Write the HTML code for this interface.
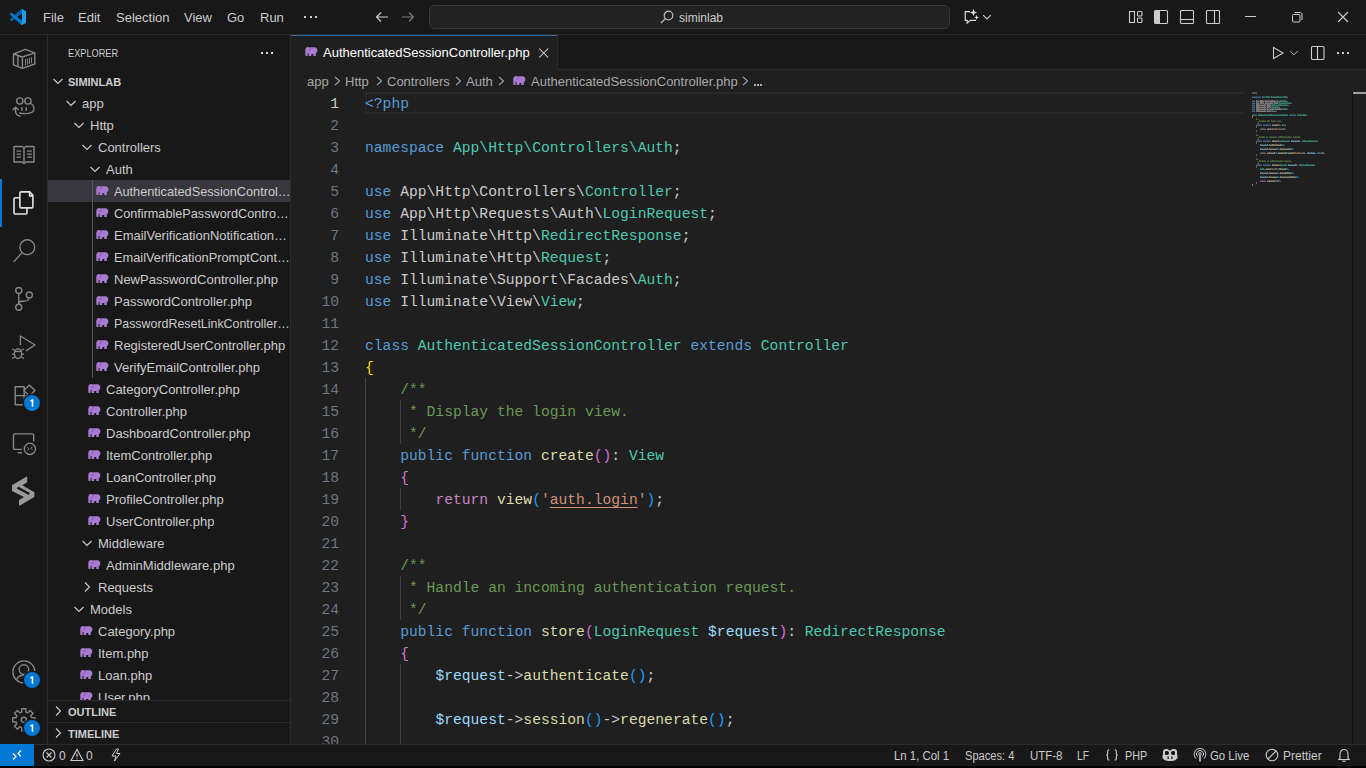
<!DOCTYPE html>
<html><head><meta charset="utf-8"><title>VS Code</title>
<style>
html,body{margin:0;padding:0;width:1366px;height:768px;overflow:hidden;background:#000;}
body{position:relative;font-family:"Liberation Sans",sans-serif;color:#cccccc;}
.a{position:absolute;display:block;}
.t{position:absolute;white-space:pre;line-height:1;}
.ui{font-size:13px;}
.code{position:absolute;left:0;top:0;font-family:"Liberation Mono",monospace;font-size:14.667px;white-space:pre;}
.ln{position:absolute;font-family:"Liberation Mono",monospace;font-size:14.667px;color:#6e7681;text-align:right;width:40px;}
.row{position:absolute;height:22px;line-height:22px;font-size:13px;white-space:nowrap;overflow:hidden;text-overflow:ellipsis;color:#cccccc;}
</style></head><body>

<div class="a" style="left:0;top:0;width:1366px;height:34px;background:#181818;border-bottom:1px solid #2b2b2b"></div>
<svg class="a" style="left:10px;top:9px" width="16" height="16" viewBox="0 0 100 100">
<path fill="#0065a9" d="M96.5 10.8L75.9 0.9C73.5-0.3 70.7 0.2 68.8 2.1L1.3 63.6C-0.5 65.3-0.5 68.1 1.3 69.8L6.8 74.8C8.3 76.2 10.5 76.3 12.1 75.1L93.3 13.5C96 11.5 99.9 13.4 99.9 16.8V16.6C99.9 14.2 98.6 11.9 96.5 10.8Z"/>
<path fill="#007acc" d="M96.5 89.2L75.9 99.1C73.5 100.3 70.7 99.8 68.8 97.9L1.3 36.4C-0.5 34.7-0.5 31.9 1.3 30.2L6.8 25.2C8.3 23.8 10.5 23.7 12.1 24.9L93.3 86.5C96 88.5 99.9 86.6 99.9 83.2V83.4C99.9 85.8 98.6 88.1 96.5 89.2Z"/>
<path fill="#1f9cf0" d="M75.9 99.1C73.5 100.3 70.7 99.8 68.8 97.9C71.1 100.2 75 98.6 75 95.3V4.7C75 1.4 71.1-0.2 68.8 2.1C70.7 0.2 73.5-0.3 75.9 0.9L96.5 10.8C98.6 11.9 100 14.1 100 16.5V83.5C100 85.9 98.6 88.1 96.5 89.2L75.9 99.1Z"/>
</svg>
<div class="t ui" style="left:43px;top:11px;color:#cccccc">File</div>
<div class="t ui" style="left:78px;top:11px;color:#cccccc">Edit</div>
<div class="t ui" style="left:116px;top:11px;color:#cccccc">Selection</div>
<div class="t ui" style="left:184px;top:11px;color:#cccccc">View</div>
<div class="t ui" style="left:227px;top:11px;color:#cccccc">Go</div>
<div class="t ui" style="left:260px;top:11px;color:#cccccc">Run</div>
<div class="a" style="left:304px;top:16px;width:2px;height:2px;background:#cccccc"></div>
<div class="a" style="left:309.5px;top:16px;width:2px;height:2px;background:#cccccc"></div>
<div class="a" style="left:315px;top:16px;width:2px;height:2px;background:#cccccc"></div>
<svg class="a" style="left:374px;top:9px" width="16" height="16" viewBox="0 0 16 16"><path d="M14 8H2.5M7 3.5L2.5 8L7 12.5" fill="none" stroke="#cccccc" stroke-width="1.2"/></svg>
<svg class="a" style="left:400px;top:9px" width="16" height="16" viewBox="0 0 16 16"><path d="M2 8H13.5M9 3.5L13.5 8L9 12.5" fill="none" stroke="#7a7a7a" stroke-width="1.2"/></svg>
<div class="a" style="left:429px;top:5px;width:519px;height:22px;background:#222222;border:1px solid #383838;border-radius:6px"></div>
<svg class="a" style="left:659px;top:9px" width="16" height="16" viewBox="0 0 16 16"><circle cx="9.5" cy="6.5" r="4.3" fill="none" stroke="#bbbbbb" stroke-width="1.2"/><path d="M6.5 9.5L2 14" stroke="#bbbbbb" stroke-width="1.3"/></svg>
<div class="t" style="left:679px;top:12px;font-size:12px;color:#cccccc">siminlab</div>
<svg class="a" style="left:955px;top:3px" width="45" height="27" viewBox="955 3 45 27"><path d="M970 11.6H965.2V20.3H967.2V23L970.5 20.3H976" fill="none" stroke="#dddddd" stroke-width="1.2"/><path d="M973.5 8.8L974.5 11.5L977.2 12.5L974.5 13.5L973.5 16.2L972.5 13.5L969.8 12.5L972.5 11.5Z" fill="#dddddd"/><path d="M976.6 14.8L977.3 16.7L979.2 17.4L977.3 18.1L976.6 20L975.9 18.1L974 17.4L975.9 16.7Z" fill="#dddddd"/><path d="M983.2 15.2L987 19L990.8 15.2" fill="none" stroke="#cccccc" stroke-width="1.1"/></svg>
<svg class="a" style="left:1128px;top:9px" width="16" height="16" viewBox="0 0 16 16"><rect x="1.5" y="2.5" width="5" height="11" fill="none" stroke="#cccccc" stroke-width="1.1"/><rect x="9.5" y="2.5" width="4.5" height="4.5" rx="1" fill="none" stroke="#cccccc" stroke-width="1.1"/><rect x="9.5" y="9" width="4.5" height="4.5" rx="1" fill="none" stroke="#cccccc" stroke-width="1.1"/></svg>
<svg class="a" style="left:1153px;top:9px" width="16" height="16" viewBox="0 0 16 16"><rect x="1.5" y="1.5" width="13" height="13" rx="1" fill="none" stroke="#cccccc" stroke-width="1.1"/><rect x="2" y="2" width="5" height="12" fill="#cccccc"/></svg>
<svg class="a" style="left:1179px;top:9px" width="16" height="16" viewBox="0 0 16 16"><rect x="1.5" y="1.5" width="13" height="13" rx="1" fill="none" stroke="#cccccc" stroke-width="1.1"/><path d="M2 10.5H14" stroke="#cccccc" stroke-width="1.1"/></svg>
<svg class="a" style="left:1205px;top:9px" width="16" height="16" viewBox="0 0 16 16"><rect x="1.5" y="1.5" width="13" height="13" rx="1" fill="none" stroke="#cccccc" stroke-width="1.1"/><path d="M9.5 2V14" stroke="#cccccc" stroke-width="1.1"/></svg>
<div class="a" style="left:1245px;top:16px;width:11px;height:1px;background:#cccccc"></div>
<svg class="a" style="left:1290px;top:10px" width="14" height="14" viewBox="0 0 14 14"><rect x="2.5" y="4.5" width="7.5" height="7.5" rx="1" fill="none" stroke="#cccccc" stroke-width="1"/><path d="M4.5 2.5H10.5C11 2.5 12 3.5 12 4V10" fill="none" stroke="#cccccc" stroke-width="1"/></svg>
<svg class="a" style="left:1337px;top:11px" width="12" height="12" viewBox="0 0 12 12"><path d="M1 1L11 11M11 1L1 11" stroke="#cccccc" stroke-width="1.1"/></svg>
<div class="a" style="left:0;top:35px;width:47px;height:709px;background:#181818;border-right:1px solid #2b2b2b"></div>
<div class="a" style="left:0;top:179px;width:2px;height:48px;background:#0078d4"></div>
<svg class="a" style="left:10px;top:45px" width="28" height="28" viewBox="0 0 28 28" fill="none" stroke="#868686" stroke-width="1.4" stroke-linejoin="round"><path d="M3.5 9L15.3 4.4L24.8 7.8V19L12.4 23.3L3.5 19.9Z"/><path d="M3.5 9L12.4 12L24.8 7.8M12.4 12V23.3M7.9 10.6V21.5"/><path d="M15.5 14.2V20.3M17.5 13.5V19.6M19.5 12.8V18.9M21.5 12.1V18.2" stroke-width="1"/></svg>
<svg class="a" style="left:10px;top:93px" width="28" height="28" viewBox="0 0 28 28" fill="none" stroke="#868686" stroke-width="1.4" stroke-linejoin="round"><circle cx="9.8" cy="8" r="3.1"/><circle cx="17.9" cy="8" r="3.1"/><path d="M20.3 10.3C22.6 11.1 24 13.1 24 15.6C24 18.9 21 20.6 16 20.6C12.8 20.6 10.4 20.3 9 19.8"/><path d="M11.9 14.3V17.8M16.2 14.3V17.8" stroke-width="1.5"/><path d="M5.5 14.2V18C5.5 20.6 7.6 22.8 10.6 23.2M2.6 17.1L5.5 14.2L8.6 17.1"/></svg>
<svg class="a" style="left:10px;top:141px" width="28" height="28" viewBox="0 0 28 28" fill="none" stroke="#868686" stroke-width="1.4" stroke-linejoin="round"><path d="M4 5.5H12.2L14 7L15.8 5.5H24V21H15.8L14 22.6L12.2 21H4Z"/><path d="M14 7V22.4"/><path d="M6.6 10.2H11M6.6 13.1H11M6.6 16.2H11M17.1 10.2H21.9M17.1 13.1H21.9M17.1 16.2H21.9" stroke-width="1.2"/></svg>
<svg class="a" style="left:10px;top:189px" width="28" height="28" viewBox="0 0 28 28" fill="none" stroke="#e2e2e2" stroke-width="1.6" stroke-linejoin="round"><path d="M9.9 8.8H5.2C4.5 8.8 4 9.3 4 10V23.8C4 24.5 4.5 25 5.2 25H15.8C16.5 25 17 24.5 17 23.8V18.9"/><path d="M11.1 2.9H19.7L22.9 6.2V17.7C22.9 18.4 22.4 18.9 21.7 18.9H11.1C10.4 18.9 9.9 18.4 9.9 17.7V4.1C9.9 3.4 10.4 2.9 11.1 2.9Z"/><path d="M19.6 3.2V6.9H22.7"/></svg>
<svg class="a" style="left:10px;top:237px" width="28" height="28" viewBox="0 0 28 28" fill="none" stroke="#868686" stroke-width="1.4" stroke-linejoin="round"><circle cx="17.3" cy="10.2" r="7.4"/><path d="M12 15.6L3.8 24.9"/></svg>
<svg class="a" style="left:10px;top:285px" width="28" height="28" viewBox="0 0 28 28" fill="none" stroke="#868686" stroke-width="1.4" stroke-linejoin="round"><circle cx="8.75" cy="5.5" r="3"/><circle cx="8.75" cy="22.2" r="3"/><circle cx="19.3" cy="10" r="3"/><path d="M8.75 8.5V19.2"/><path d="M19.1 13C18.8 15.3 16.8 16.2 13.5 16.2H11.5C9.8 16.2 8.75 17.3 8.75 18.8"/></svg>
<svg class="a" style="left:10px;top:333px" width="28" height="28" viewBox="0 0 28 28" fill="none" stroke="#868686" stroke-width="1.4" stroke-linejoin="round"><path d="M10.4 12.2V3L25 12L15.9 17.9"/><ellipse cx="8" cy="20.6" rx="3.6" ry="4.9"/><path d="M4.4 18.4H11.6"/><path d="M2.1 16L4.6 17.2M13.9 16L11.4 17.2M1.9 21.2H4.3M11.7 21.2H14.1M2.1 25.4L4.5 24.1M13.9 25.4L11.5 24.1" stroke-width="1.3"/></svg>
<svg class="a" style="left:10px;top:381px" width="28" height="28" viewBox="0 0 28 28" fill="none" stroke="#868686" stroke-width="1.4" stroke-linejoin="round"><path d="M5.2 5.8H14.2V23.8H5.2ZM5.2 14.6H14.2M14.2 23.8H23V14.6H14.2"/><path d="M19.4 3.9L24.9 9.4L19.4 14.9L13.9 9.4Z"/></svg>
<svg class="a" style="left:10px;top:429px" width="28" height="28" viewBox="0 0 28 28" fill="none" stroke="#868686" stroke-width="1.4" stroke-linejoin="round"><path d="M12 20.4H4.7C4 20.4 3.5 19.9 3.5 19.2V6.1C3.5 5.4 4 4.9 4.7 4.9H22.5C23.2 4.9 23.7 5.4 23.7 6.1V12.4"/><path d="M7.7 23.7H12"/><circle cx="19.9" cy="19.9" r="5.6"/><path d="M17.3 18.4L19 19.9L17.3 21.4M22.5 17.7L20.8 19.2L22.5 20.7" stroke-width="1"/></svg>
<svg class="a" style="left:0px;top:464px" width="48" height="48" viewBox="0 464 48 48"><path fill="#9a9a9a" d="M27.2 476.2V482.3L22.3 485.3L34.4 492.2V497L19 506V500L24 497L12 490.9V485.3Z"/><path d="M17.6 487.6L29.4 494" stroke="#181818" stroke-width="2.4"/></svg>
<svg class="a" style="left:10px;top:658px" width="28" height="28" viewBox="0 0 28 28" fill="none" stroke="#868686" stroke-width="1.4" stroke-linejoin="round"><circle cx="13.9" cy="13.9" r="11"/><circle cx="13.9" cy="11.6" r="4.8"/><path d="M6.6 21.6C8 18.6 10.7 17 13.9 17C17.1 17 19.8 18.6 21.2 21.6"/></svg>
<svg class="a" style="left:10px;top:706px" width="28" height="28" viewBox="0 0 28 28" fill="none" stroke="#868686" stroke-width="1.4" stroke-linejoin="round"><path d="M11.73 6.07L11.64 2.71L15.96 2.71L15.87 6.07L17.80 6.87L20.12 4.43L23.17 7.48L20.73 9.80L21.53 11.73L24.89 11.64L24.89 15.96L21.53 15.87L20.73 17.80L23.17 20.12L20.12 23.17L17.80 20.73L15.87 21.53L15.96 24.89L11.64 24.89L11.73 21.53L9.80 20.73L7.48 23.17L4.43 20.12L6.87 17.80L6.07 15.87L2.71 15.96L2.71 11.64L6.07 11.73L6.87 9.80L4.43 7.48L7.48 4.43L9.80 6.87Z"/><circle cx="13.8" cy="13.8" r="2.6"/></svg>
<div class="a" style="left:24px;top:395px;width:16px;height:16px;border-radius:8px;background:#0078d4;box-shadow:0 0 0 1.5px #181818"></div><svg class="a" style="left:24px;top:395px" width="16" height="16" viewBox="0 0 16 16"><path d="M6.3 6.1L8.5 4.9V11.8" fill="none" stroke="#fff" stroke-width="1.6" stroke-linejoin="round"/></svg>
<div class="a" style="left:24px;top:672px;width:16px;height:16px;border-radius:8px;background:#0078d4;box-shadow:0 0 0 1.5px #181818"></div><svg class="a" style="left:24px;top:672px" width="16" height="16" viewBox="0 0 16 16"><path d="M6.3 6.1L8.5 4.9V11.8" fill="none" stroke="#fff" stroke-width="1.6" stroke-linejoin="round"/></svg>
<div class="a" style="left:24px;top:720px;width:16px;height:16px;border-radius:8px;background:#0078d4;box-shadow:0 0 0 1.5px #181818"></div><svg class="a" style="left:24px;top:720px" width="16" height="16" viewBox="0 0 16 16"><path d="M6.3 6.1L8.5 4.9V11.8" fill="none" stroke="#fff" stroke-width="1.6" stroke-linejoin="round"/></svg>
<div class="a" style="left:48px;top:35px;width:242px;height:709px;background:#181818;border-right:1px solid #2b2b2b"></div>
<div class="t" style="left:68px;top:48px;font-size:11px;color:#cccccc;transform:scaleX(0.835);transform-origin:0 0">EXPLORER</div>
<div class="a" style="left:261px;top:52px;width:2px;height:2px;background:#dddddd"></div>
<div class="a" style="left:266px;top:52px;width:2px;height:2px;background:#dddddd"></div>
<div class="a" style="left:271px;top:52px;width:2px;height:2px;background:#dddddd"></div>
<svg class="a" style="left:50px;top:73px" width="16" height="16" viewBox="0 0 16 16"><path d="M3.5 6L8 10.5L12.5 6" fill="none" stroke="#cccccc" stroke-width="1.1"/></svg>
<div class="t" style="left:68px;top:77px;font-size:11px;font-weight:bold;color:#cccccc">SIMINLAB</div>
<div class="a" style="left:48px;top:92px;width:242px;height:608px;overflow:hidden">
<svg class="a" style="left:15px;top:3px" width="16" height="16" viewBox="0 0 16 16"><path d="M3.5 6L8 10.5L12.5 6" fill="none" stroke="#cccccc" stroke-width="1.1"/></svg>
<div class="row" style="left:34px;top:1px">app</div>
<svg class="a" style="left:23px;top:25px" width="16" height="16" viewBox="0 0 16 16"><path d="M3.5 6L8 10.5L12.5 6" fill="none" stroke="#cccccc" stroke-width="1.1"/></svg>
<div class="row" style="left:42px;top:23px">Http</div>
<svg class="a" style="left:31px;top:47px" width="16" height="16" viewBox="0 0 16 16"><path d="M3.5 6L8 10.5L12.5 6" fill="none" stroke="#cccccc" stroke-width="1.1"/></svg>
<div class="row" style="left:50px;top:45px">Controllers</div>
<svg class="a" style="left:39px;top:69px" width="16" height="16" viewBox="0 0 16 16"><path d="M3.5 6L8 10.5L12.5 6" fill="none" stroke="#cccccc" stroke-width="1.1"/></svg>
<div class="row" style="left:58px;top:67px">Auth</div>
<div class="a" style="left:0;top:88px;width:242px;height:22px;background:#37373d"></div>
<svg class="a" style="left:47.6px;top:94.2px" width="13" height="10" viewBox="0 0 13 10"><path fill="#a97ad2" d="M0.3 2.8C0.3 1.1 1.5 0 3 0C3.7 0 4.3 0.2 4.8 0.5C5.3 0.3 5.9 0.2 6.5 0.2H9.5C11.2 0.2 12.4 1.5 12.4 3.3C12.4 4.6 11.9 5.5 11.2 6.1L10.8 6.4V9.1H8.3V7H6.3V9.1H3.6V6.6L2.6 5.6V8C2.6 8.6 2.2 9 1.6 9H1.2C0.6 9 0.3 8.6 0.3 8Z"/><path d="M5.2 0.9C5.6 2.1 5.2 3.5 3.4 3.9" fill="none" stroke="#3a2a55" stroke-width="0.6" opacity=".6"/></svg>
<div class="row" style="left:66px;top:89px;overflow:visible;transform:scaleX(0.977);transform-origin:0 0">AuthenticatedSessionControl…</div>
<svg class="a" style="left:47.6px;top:116.2px" width="13" height="10" viewBox="0 0 13 10"><path fill="#a97ad2" d="M0.3 2.8C0.3 1.1 1.5 0 3 0C3.7 0 4.3 0.2 4.8 0.5C5.3 0.3 5.9 0.2 6.5 0.2H9.5C11.2 0.2 12.4 1.5 12.4 3.3C12.4 4.6 11.9 5.5 11.2 6.1L10.8 6.4V9.1H8.3V7H6.3V9.1H3.6V6.6L2.6 5.6V8C2.6 8.6 2.2 9 1.6 9H1.2C0.6 9 0.3 8.6 0.3 8Z"/><path d="M5.2 0.9C5.6 2.1 5.2 3.5 3.4 3.9" fill="none" stroke="#3a2a55" stroke-width="0.6" opacity=".6"/></svg>
<div class="row" style="left:66px;top:111px;overflow:visible;transform:scaleX(0.975);transform-origin:0 0">ConfirmablePasswordContro…</div>
<svg class="a" style="left:47.6px;top:138.2px" width="13" height="10" viewBox="0 0 13 10"><path fill="#a97ad2" d="M0.3 2.8C0.3 1.1 1.5 0 3 0C3.7 0 4.3 0.2 4.8 0.5C5.3 0.3 5.9 0.2 6.5 0.2H9.5C11.2 0.2 12.4 1.5 12.4 3.3C12.4 4.6 11.9 5.5 11.2 6.1L10.8 6.4V9.1H8.3V7H6.3V9.1H3.6V6.6L2.6 5.6V8C2.6 8.6 2.2 9 1.6 9H1.2C0.6 9 0.3 8.6 0.3 8Z"/><path d="M5.2 0.9C5.6 2.1 5.2 3.5 3.4 3.9" fill="none" stroke="#3a2a55" stroke-width="0.6" opacity=".6"/></svg>
<div class="row" style="left:66px;top:133px;overflow:visible;transform:scaleX(0.998);transform-origin:0 0">EmailVerificationNotification…</div>
<svg class="a" style="left:47.6px;top:160.2px" width="13" height="10" viewBox="0 0 13 10"><path fill="#a97ad2" d="M0.3 2.8C0.3 1.1 1.5 0 3 0C3.7 0 4.3 0.2 4.8 0.5C5.3 0.3 5.9 0.2 6.5 0.2H9.5C11.2 0.2 12.4 1.5 12.4 3.3C12.4 4.6 11.9 5.5 11.2 6.1L10.8 6.4V9.1H8.3V7H6.3V9.1H3.6V6.6L2.6 5.6V8C2.6 8.6 2.2 9 1.6 9H1.2C0.6 9 0.3 8.6 0.3 8Z"/><path d="M5.2 0.9C5.6 2.1 5.2 3.5 3.4 3.9" fill="none" stroke="#3a2a55" stroke-width="0.6" opacity=".6"/></svg>
<div class="row" style="left:66px;top:155px;overflow:visible;transform:scaleX(0.985);transform-origin:0 0">EmailVerificationPromptCont…</div>
<svg class="a" style="left:47.6px;top:182.2px" width="13" height="10" viewBox="0 0 13 10"><path fill="#a97ad2" d="M0.3 2.8C0.3 1.1 1.5 0 3 0C3.7 0 4.3 0.2 4.8 0.5C5.3 0.3 5.9 0.2 6.5 0.2H9.5C11.2 0.2 12.4 1.5 12.4 3.3C12.4 4.6 11.9 5.5 11.2 6.1L10.8 6.4V9.1H8.3V7H6.3V9.1H3.6V6.6L2.6 5.6V8C2.6 8.6 2.2 9 1.6 9H1.2C0.6 9 0.3 8.6 0.3 8Z"/><path d="M5.2 0.9C5.6 2.1 5.2 3.5 3.4 3.9" fill="none" stroke="#3a2a55" stroke-width="0.6" opacity=".6"/></svg>
<div class="row" style="left:66px;top:177px">NewPasswordController.php</div>
<svg class="a" style="left:47.6px;top:204.2px" width="13" height="10" viewBox="0 0 13 10"><path fill="#a97ad2" d="M0.3 2.8C0.3 1.1 1.5 0 3 0C3.7 0 4.3 0.2 4.8 0.5C5.3 0.3 5.9 0.2 6.5 0.2H9.5C11.2 0.2 12.4 1.5 12.4 3.3C12.4 4.6 11.9 5.5 11.2 6.1L10.8 6.4V9.1H8.3V7H6.3V9.1H3.6V6.6L2.6 5.6V8C2.6 8.6 2.2 9 1.6 9H1.2C0.6 9 0.3 8.6 0.3 8Z"/><path d="M5.2 0.9C5.6 2.1 5.2 3.5 3.4 3.9" fill="none" stroke="#3a2a55" stroke-width="0.6" opacity=".6"/></svg>
<div class="row" style="left:66px;top:199px">PasswordController.php</div>
<svg class="a" style="left:47.6px;top:226.2px" width="13" height="10" viewBox="0 0 13 10"><path fill="#a97ad2" d="M0.3 2.8C0.3 1.1 1.5 0 3 0C3.7 0 4.3 0.2 4.8 0.5C5.3 0.3 5.9 0.2 6.5 0.2H9.5C11.2 0.2 12.4 1.5 12.4 3.3C12.4 4.6 11.9 5.5 11.2 6.1L10.8 6.4V9.1H8.3V7H6.3V9.1H3.6V6.6L2.6 5.6V8C2.6 8.6 2.2 9 1.6 9H1.2C0.6 9 0.3 8.6 0.3 8Z"/><path d="M5.2 0.9C5.6 2.1 5.2 3.5 3.4 3.9" fill="none" stroke="#3a2a55" stroke-width="0.6" opacity=".6"/></svg>
<div class="row" style="left:66px;top:221px;overflow:visible;transform:scaleX(0.954);transform-origin:0 0">PasswordResetLinkController…</div>
<svg class="a" style="left:47.6px;top:248.2px" width="13" height="10" viewBox="0 0 13 10"><path fill="#a97ad2" d="M0.3 2.8C0.3 1.1 1.5 0 3 0C3.7 0 4.3 0.2 4.8 0.5C5.3 0.3 5.9 0.2 6.5 0.2H9.5C11.2 0.2 12.4 1.5 12.4 3.3C12.4 4.6 11.9 5.5 11.2 6.1L10.8 6.4V9.1H8.3V7H6.3V9.1H3.6V6.6L2.6 5.6V8C2.6 8.6 2.2 9 1.6 9H1.2C0.6 9 0.3 8.6 0.3 8Z"/><path d="M5.2 0.9C5.6 2.1 5.2 3.5 3.4 3.9" fill="none" stroke="#3a2a55" stroke-width="0.6" opacity=".6"/></svg>
<div class="row" style="left:66px;top:243px">RegisteredUserController.php</div>
<svg class="a" style="left:47.6px;top:270.2px" width="13" height="10" viewBox="0 0 13 10"><path fill="#a97ad2" d="M0.3 2.8C0.3 1.1 1.5 0 3 0C3.7 0 4.3 0.2 4.8 0.5C5.3 0.3 5.9 0.2 6.5 0.2H9.5C11.2 0.2 12.4 1.5 12.4 3.3C12.4 4.6 11.9 5.5 11.2 6.1L10.8 6.4V9.1H8.3V7H6.3V9.1H3.6V6.6L2.6 5.6V8C2.6 8.6 2.2 9 1.6 9H1.2C0.6 9 0.3 8.6 0.3 8Z"/><path d="M5.2 0.9C5.6 2.1 5.2 3.5 3.4 3.9" fill="none" stroke="#3a2a55" stroke-width="0.6" opacity=".6"/></svg>
<div class="row" style="left:66px;top:265px">VerifyEmailController.php</div>
<svg class="a" style="left:39.6px;top:292.2px" width="13" height="10" viewBox="0 0 13 10"><path fill="#a97ad2" d="M0.3 2.8C0.3 1.1 1.5 0 3 0C3.7 0 4.3 0.2 4.8 0.5C5.3 0.3 5.9 0.2 6.5 0.2H9.5C11.2 0.2 12.4 1.5 12.4 3.3C12.4 4.6 11.9 5.5 11.2 6.1L10.8 6.4V9.1H8.3V7H6.3V9.1H3.6V6.6L2.6 5.6V8C2.6 8.6 2.2 9 1.6 9H1.2C0.6 9 0.3 8.6 0.3 8Z"/><path d="M5.2 0.9C5.6 2.1 5.2 3.5 3.4 3.9" fill="none" stroke="#3a2a55" stroke-width="0.6" opacity=".6"/></svg>
<div class="row" style="left:58px;top:287px">CategoryController.php</div>
<svg class="a" style="left:39.6px;top:314.2px" width="13" height="10" viewBox="0 0 13 10"><path fill="#a97ad2" d="M0.3 2.8C0.3 1.1 1.5 0 3 0C3.7 0 4.3 0.2 4.8 0.5C5.3 0.3 5.9 0.2 6.5 0.2H9.5C11.2 0.2 12.4 1.5 12.4 3.3C12.4 4.6 11.9 5.5 11.2 6.1L10.8 6.4V9.1H8.3V7H6.3V9.1H3.6V6.6L2.6 5.6V8C2.6 8.6 2.2 9 1.6 9H1.2C0.6 9 0.3 8.6 0.3 8Z"/><path d="M5.2 0.9C5.6 2.1 5.2 3.5 3.4 3.9" fill="none" stroke="#3a2a55" stroke-width="0.6" opacity=".6"/></svg>
<div class="row" style="left:58px;top:309px">Controller.php</div>
<svg class="a" style="left:39.6px;top:336.2px" width="13" height="10" viewBox="0 0 13 10"><path fill="#a97ad2" d="M0.3 2.8C0.3 1.1 1.5 0 3 0C3.7 0 4.3 0.2 4.8 0.5C5.3 0.3 5.9 0.2 6.5 0.2H9.5C11.2 0.2 12.4 1.5 12.4 3.3C12.4 4.6 11.9 5.5 11.2 6.1L10.8 6.4V9.1H8.3V7H6.3V9.1H3.6V6.6L2.6 5.6V8C2.6 8.6 2.2 9 1.6 9H1.2C0.6 9 0.3 8.6 0.3 8Z"/><path d="M5.2 0.9C5.6 2.1 5.2 3.5 3.4 3.9" fill="none" stroke="#3a2a55" stroke-width="0.6" opacity=".6"/></svg>
<div class="row" style="left:58px;top:331px">DashboardController.php</div>
<svg class="a" style="left:39.6px;top:358.2px" width="13" height="10" viewBox="0 0 13 10"><path fill="#a97ad2" d="M0.3 2.8C0.3 1.1 1.5 0 3 0C3.7 0 4.3 0.2 4.8 0.5C5.3 0.3 5.9 0.2 6.5 0.2H9.5C11.2 0.2 12.4 1.5 12.4 3.3C12.4 4.6 11.9 5.5 11.2 6.1L10.8 6.4V9.1H8.3V7H6.3V9.1H3.6V6.6L2.6 5.6V8C2.6 8.6 2.2 9 1.6 9H1.2C0.6 9 0.3 8.6 0.3 8Z"/><path d="M5.2 0.9C5.6 2.1 5.2 3.5 3.4 3.9" fill="none" stroke="#3a2a55" stroke-width="0.6" opacity=".6"/></svg>
<div class="row" style="left:58px;top:353px">ItemController.php</div>
<svg class="a" style="left:39.6px;top:380.2px" width="13" height="10" viewBox="0 0 13 10"><path fill="#a97ad2" d="M0.3 2.8C0.3 1.1 1.5 0 3 0C3.7 0 4.3 0.2 4.8 0.5C5.3 0.3 5.9 0.2 6.5 0.2H9.5C11.2 0.2 12.4 1.5 12.4 3.3C12.4 4.6 11.9 5.5 11.2 6.1L10.8 6.4V9.1H8.3V7H6.3V9.1H3.6V6.6L2.6 5.6V8C2.6 8.6 2.2 9 1.6 9H1.2C0.6 9 0.3 8.6 0.3 8Z"/><path d="M5.2 0.9C5.6 2.1 5.2 3.5 3.4 3.9" fill="none" stroke="#3a2a55" stroke-width="0.6" opacity=".6"/></svg>
<div class="row" style="left:58px;top:375px">LoanController.php</div>
<svg class="a" style="left:39.6px;top:402.2px" width="13" height="10" viewBox="0 0 13 10"><path fill="#a97ad2" d="M0.3 2.8C0.3 1.1 1.5 0 3 0C3.7 0 4.3 0.2 4.8 0.5C5.3 0.3 5.9 0.2 6.5 0.2H9.5C11.2 0.2 12.4 1.5 12.4 3.3C12.4 4.6 11.9 5.5 11.2 6.1L10.8 6.4V9.1H8.3V7H6.3V9.1H3.6V6.6L2.6 5.6V8C2.6 8.6 2.2 9 1.6 9H1.2C0.6 9 0.3 8.6 0.3 8Z"/><path d="M5.2 0.9C5.6 2.1 5.2 3.5 3.4 3.9" fill="none" stroke="#3a2a55" stroke-width="0.6" opacity=".6"/></svg>
<div class="row" style="left:58px;top:397px">ProfileController.php</div>
<svg class="a" style="left:39.6px;top:424.2px" width="13" height="10" viewBox="0 0 13 10"><path fill="#a97ad2" d="M0.3 2.8C0.3 1.1 1.5 0 3 0C3.7 0 4.3 0.2 4.8 0.5C5.3 0.3 5.9 0.2 6.5 0.2H9.5C11.2 0.2 12.4 1.5 12.4 3.3C12.4 4.6 11.9 5.5 11.2 6.1L10.8 6.4V9.1H8.3V7H6.3V9.1H3.6V6.6L2.6 5.6V8C2.6 8.6 2.2 9 1.6 9H1.2C0.6 9 0.3 8.6 0.3 8Z"/><path d="M5.2 0.9C5.6 2.1 5.2 3.5 3.4 3.9" fill="none" stroke="#3a2a55" stroke-width="0.6" opacity=".6"/></svg>
<div class="row" style="left:58px;top:419px">UserController.php</div>
<svg class="a" style="left:31px;top:443px" width="16" height="16" viewBox="0 0 16 16"><path d="M3.5 6L8 10.5L12.5 6" fill="none" stroke="#cccccc" stroke-width="1.1"/></svg>
<div class="row" style="left:50px;top:441px">Middleware</div>
<svg class="a" style="left:39.6px;top:468.2px" width="13" height="10" viewBox="0 0 13 10"><path fill="#a97ad2" d="M0.3 2.8C0.3 1.1 1.5 0 3 0C3.7 0 4.3 0.2 4.8 0.5C5.3 0.3 5.9 0.2 6.5 0.2H9.5C11.2 0.2 12.4 1.5 12.4 3.3C12.4 4.6 11.9 5.5 11.2 6.1L10.8 6.4V9.1H8.3V7H6.3V9.1H3.6V6.6L2.6 5.6V8C2.6 8.6 2.2 9 1.6 9H1.2C0.6 9 0.3 8.6 0.3 8Z"/><path d="M5.2 0.9C5.6 2.1 5.2 3.5 3.4 3.9" fill="none" stroke="#3a2a55" stroke-width="0.6" opacity=".6"/></svg>
<div class="row" style="left:58px;top:463px">AdminMiddleware.php</div>
<svg class="a" style="left:31px;top:487px" width="16" height="16" viewBox="0 0 16 16"><path d="M6 3.5L10.5 8L6 12.5" fill="none" stroke="#cccccc" stroke-width="1.1"/></svg>
<div class="row" style="left:50px;top:485px">Requests</div>
<svg class="a" style="left:23px;top:509px" width="16" height="16" viewBox="0 0 16 16"><path d="M3.5 6L8 10.5L12.5 6" fill="none" stroke="#cccccc" stroke-width="1.1"/></svg>
<div class="row" style="left:42px;top:507px">Models</div>
<svg class="a" style="left:31.6px;top:534.2px" width="13" height="10" viewBox="0 0 13 10"><path fill="#a97ad2" d="M0.3 2.8C0.3 1.1 1.5 0 3 0C3.7 0 4.3 0.2 4.8 0.5C5.3 0.3 5.9 0.2 6.5 0.2H9.5C11.2 0.2 12.4 1.5 12.4 3.3C12.4 4.6 11.9 5.5 11.2 6.1L10.8 6.4V9.1H8.3V7H6.3V9.1H3.6V6.6L2.6 5.6V8C2.6 8.6 2.2 9 1.6 9H1.2C0.6 9 0.3 8.6 0.3 8Z"/><path d="M5.2 0.9C5.6 2.1 5.2 3.5 3.4 3.9" fill="none" stroke="#3a2a55" stroke-width="0.6" opacity=".6"/></svg>
<div class="row" style="left:50px;top:529px">Category.php</div>
<svg class="a" style="left:31.6px;top:556.2px" width="13" height="10" viewBox="0 0 13 10"><path fill="#a97ad2" d="M0.3 2.8C0.3 1.1 1.5 0 3 0C3.7 0 4.3 0.2 4.8 0.5C5.3 0.3 5.9 0.2 6.5 0.2H9.5C11.2 0.2 12.4 1.5 12.4 3.3C12.4 4.6 11.9 5.5 11.2 6.1L10.8 6.4V9.1H8.3V7H6.3V9.1H3.6V6.6L2.6 5.6V8C2.6 8.6 2.2 9 1.6 9H1.2C0.6 9 0.3 8.6 0.3 8Z"/><path d="M5.2 0.9C5.6 2.1 5.2 3.5 3.4 3.9" fill="none" stroke="#3a2a55" stroke-width="0.6" opacity=".6"/></svg>
<div class="row" style="left:50px;top:551px">Item.php</div>
<svg class="a" style="left:31.6px;top:578.2px" width="13" height="10" viewBox="0 0 13 10"><path fill="#a97ad2" d="M0.3 2.8C0.3 1.1 1.5 0 3 0C3.7 0 4.3 0.2 4.8 0.5C5.3 0.3 5.9 0.2 6.5 0.2H9.5C11.2 0.2 12.4 1.5 12.4 3.3C12.4 4.6 11.9 5.5 11.2 6.1L10.8 6.4V9.1H8.3V7H6.3V9.1H3.6V6.6L2.6 5.6V8C2.6 8.6 2.2 9 1.6 9H1.2C0.6 9 0.3 8.6 0.3 8Z"/><path d="M5.2 0.9C5.6 2.1 5.2 3.5 3.4 3.9" fill="none" stroke="#3a2a55" stroke-width="0.6" opacity=".6"/></svg>
<div class="row" style="left:50px;top:573px">Loan.php</div>
<svg class="a" style="left:31.6px;top:600.2px" width="13" height="10" viewBox="0 0 13 10"><path fill="#a97ad2" d="M0.3 2.8C0.3 1.1 1.5 0 3 0C3.7 0 4.3 0.2 4.8 0.5C5.3 0.3 5.9 0.2 6.5 0.2H9.5C11.2 0.2 12.4 1.5 12.4 3.3C12.4 4.6 11.9 5.5 11.2 6.1L10.8 6.4V9.1H8.3V7H6.3V9.1H3.6V6.6L2.6 5.6V8C2.6 8.6 2.2 9 1.6 9H1.2C0.6 9 0.3 8.6 0.3 8Z"/><path d="M5.2 0.9C5.6 2.1 5.2 3.5 3.4 3.9" fill="none" stroke="#3a2a55" stroke-width="0.6" opacity=".6"/></svg>
<div class="row" style="left:50px;top:595px">User.php</div>
<div class="a" style="left:44px;top:88px;width:1px;height:198px;background:#585858"></div>
</div>
<div class="a" style="left:48px;top:700px;width:242px;height:0;border-top:1px solid #2b2b2b"></div>
<svg class="a" style="left:50px;top:703px" width="16" height="16" viewBox="0 0 16 16"><path d="M6 3.5L10.5 8L6 12.5" fill="none" stroke="#cccccc" stroke-width="1.1"/></svg>
<div class="t" style="left:68px;top:707px;font-size:11px;font-weight:bold;color:#cccccc">OUTLINE</div>
<div class="a" style="left:48px;top:722px;width:242px;height:0;border-top:1px solid #2b2b2b"></div>
<svg class="a" style="left:50px;top:725px" width="16" height="16" viewBox="0 0 16 16"><path d="M6 3.5L10.5 8L6 12.5" fill="none" stroke="#cccccc" stroke-width="1.1"/></svg>
<div class="t" style="left:68px;top:729px;font-size:11px;font-weight:bold;color:#cccccc">TIMELINE</div>
<div class="a" style="left:291px;top:35px;width:1075px;height:709px;background:#1f1f1f"></div>
<div class="a" style="left:291px;top:35px;width:1075px;height:34px;background:#181818;border-bottom:1px solid #2b2b2b"></div>
<div class="a" style="left:291px;top:35px;width:266px;height:35px;background:#1f1f1f;border-right:1px solid #2b2b2b"></div>
<div class="a" style="left:291px;top:35px;width:266px;height:1px;background:#2f6fa6"></div>
<svg class="a" style="left:304.6px;top:47.1px" width="13" height="10" viewBox="0 0 13 10"><path fill="#a97ad2" d="M0.3 2.8C0.3 1.1 1.5 0 3 0C3.7 0 4.3 0.2 4.8 0.5C5.3 0.3 5.9 0.2 6.5 0.2H9.5C11.2 0.2 12.4 1.5 12.4 3.3C12.4 4.6 11.9 5.5 11.2 6.1L10.8 6.4V9.1H8.3V7H6.3V9.1H3.6V6.6L2.6 5.6V8C2.6 8.6 2.2 9 1.6 9H1.2C0.6 9 0.3 8.6 0.3 8Z"/><path d="M5.2 0.9C5.6 2.1 5.2 3.5 3.4 3.9" fill="none" stroke="#3a2a55" stroke-width="0.6" opacity=".6"/></svg>
<div class="t ui" style="left:323px;top:46px;color:#ffffff">AuthenticatedSessionController.php</div>
<svg class="a" style="left:536px;top:45px" width="16" height="16" viewBox="0 0 16 16"><path d="M3.2 3.5L12.2 12.5M12.2 3.5L3.2 12.5" stroke="#dddddd" stroke-width="1.05"/></svg>
<svg class="a" style="left:1270px;top:45px" width="16" height="16" viewBox="0 0 16 16"><path d="M3.5 2.5L13 8L3.5 13.5Z" fill="none" stroke="#cccccc" stroke-width="1.1"/></svg>
<svg class="a" style="left:1288px;top:48px" width="11" height="11" viewBox="0 0 11 11"><path d="M2.2 3L6 6.8L9.8 3" fill="none" stroke="#cccccc" stroke-width="0.9"/></svg>
<svg class="a" style="left:1310px;top:45px" width="16" height="16" viewBox="0 0 16 16"><rect x="1.5" y="1.5" width="12.5" height="13" rx="1" fill="none" stroke="#cccccc" stroke-width="1.1"/><path d="M7.5 2V14" stroke="#cccccc" stroke-width="1.1"/></svg>
<div class="a" style="left:1337px;top:52px;width:2px;height:2px;background:#cccccc"></div>
<div class="a" style="left:1342px;top:52px;width:2px;height:2px;background:#cccccc"></div>
<div class="a" style="left:1347px;top:52px;width:2px;height:2px;background:#cccccc"></div>
<div class="t ui" style="left:307px;top:75px;color:#a9a9a9">app</div>
<div class="t ui" style="left:345px;top:75px;color:#a9a9a9">Http</div>
<div class="t ui" style="left:387px;top:75px;color:#a9a9a9">Controllers</div>
<div class="t ui" style="left:466px;top:75px;color:#a9a9a9">Auth</div>
<div class="t ui" style="left:531px;top:75px;color:#a9a9a9">AuthenticatedSessionController.php</div>
<svg class="a" style="left:334px;top:76px" width="7" height="10" viewBox="0 0 7 10"><path d="M1 0.8L5.5 5L1 9.2" fill="none" stroke="#a9a9a9" stroke-width="1.1"/></svg>
<svg class="a" style="left:376px;top:76px" width="7" height="10" viewBox="0 0 7 10"><path d="M1 0.8L5.5 5L1 9.2" fill="none" stroke="#a9a9a9" stroke-width="1.1"/></svg>
<svg class="a" style="left:455px;top:76px" width="7" height="10" viewBox="0 0 7 10"><path d="M1 0.8L5.5 5L1 9.2" fill="none" stroke="#a9a9a9" stroke-width="1.1"/></svg>
<svg class="a" style="left:498px;top:76px" width="7" height="10" viewBox="0 0 7 10"><path d="M1 0.8L5.5 5L1 9.2" fill="none" stroke="#a9a9a9" stroke-width="1.1"/></svg>
<svg class="a" style="left:742px;top:76px" width="7" height="10" viewBox="0 0 7 10"><path d="M1 0.8L5.5 5L1 9.2" fill="none" stroke="#a9a9a9" stroke-width="1.1"/></svg>
<svg class="a" style="left:512.6px;top:76.4px" width="13" height="10" viewBox="0 0 13 10"><path fill="#a97ad2" d="M0.3 2.8C0.3 1.1 1.5 0 3 0C3.7 0 4.3 0.2 4.8 0.5C5.3 0.3 5.9 0.2 6.5 0.2H9.5C11.2 0.2 12.4 1.5 12.4 3.3C12.4 4.6 11.9 5.5 11.2 6.1L10.8 6.4V9.1H8.3V7H6.3V9.1H3.6V6.6L2.6 5.6V8C2.6 8.6 2.2 9 1.6 9H1.2C0.6 9 0.3 8.6 0.3 8Z"/><path d="M5.2 0.9C5.6 2.1 5.2 3.5 3.4 3.9" fill="none" stroke="#3a2a55" stroke-width="0.6" opacity=".6"/></svg>
<div class="a" style="left:754px;top:84px;width:1.6px;height:1.8px;background:#b0b0b0"></div>
<div class="a" style="left:757.1px;top:84px;width:1.6px;height:1.8px;background:#b0b0b0"></div>
<div class="a" style="left:760.2px;top:84px;width:1.6px;height:1.8px;background:#b0b0b0"></div>
<div class="a" style="left:291px;top:92px;width:1075px;height:652px;overflow:hidden">
<div class="a" style="left:74px;top:0px;width:879px;height:22px;box-sizing:border-box;border:2px solid #282828;border-right:none"></div>
<div class="a" style="left:74px;top:286px;width:1px;height:748px;background:#404040"></div>
<div class="a" style="left:109px;top:308px;width:1px;height:44px;background:#404040"></div>
<div class="a" style="left:109px;top:396px;width:1px;height:22px;background:#404040"></div>
<div class="a" style="left:109px;top:484px;width:1px;height:44px;background:#404040"></div>
<div class="a" style="left:109px;top:572px;width:1px;height:110px;background:#404040"></div>
<div class="a" style="left:109px;top:748px;width:1px;height:44px;background:#404040"></div>
<div class="a" style="left:109px;top:836px;width:1px;height:154px;background:#404040"></div>
<div class="ln" style="left:8px;top:4px;color:#cccccc">1</div>
<div class="code" style="left:74px;top:4px"><span style="color:#569cd6">&lt;?php</span></div>
<div class="ln" style="left:8px;top:26px;color:#6e7681">2</div>
<div class="ln" style="left:8px;top:48px;color:#6e7681">3</div>
<div class="code" style="left:74px;top:48px"><span style="color:#569cd6">namespace</span> <span style="color:#4ec9b0">App\Http\Controllers\Auth</span><span style="color:#cccccc">;</span></div>
<div class="ln" style="left:8px;top:70px;color:#6e7681">4</div>
<div class="ln" style="left:8px;top:92px;color:#6e7681">5</div>
<div class="code" style="left:74px;top:92px"><span style="color:#569cd6">use</span><span style="color:#cccccc"> App\Http\Controllers\</span><span style="color:#4ec9b0">Controller</span><span style="color:#cccccc">;</span></div>
<div class="ln" style="left:8px;top:114px;color:#6e7681">6</div>
<div class="code" style="left:74px;top:114px"><span style="color:#569cd6">use</span><span style="color:#cccccc"> App\Http\Requests\Auth\</span><span style="color:#4ec9b0">LoginRequest</span><span style="color:#cccccc">;</span></div>
<div class="ln" style="left:8px;top:136px;color:#6e7681">7</div>
<div class="code" style="left:74px;top:136px"><span style="color:#569cd6">use</span><span style="color:#cccccc"> Illuminate\Http\</span><span style="color:#4ec9b0">RedirectResponse</span><span style="color:#cccccc">;</span></div>
<div class="ln" style="left:8px;top:158px;color:#6e7681">8</div>
<div class="code" style="left:74px;top:158px"><span style="color:#569cd6">use</span><span style="color:#cccccc"> Illuminate\Http\</span><span style="color:#4ec9b0">Request</span><span style="color:#cccccc">;</span></div>
<div class="ln" style="left:8px;top:180px;color:#6e7681">9</div>
<div class="code" style="left:74px;top:180px"><span style="color:#569cd6">use</span><span style="color:#cccccc"> Illuminate\Support\Facades\</span><span style="color:#4ec9b0">Auth</span><span style="color:#cccccc">;</span></div>
<div class="ln" style="left:8px;top:202px;color:#6e7681">10</div>
<div class="code" style="left:74px;top:202px"><span style="color:#569cd6">use</span><span style="color:#cccccc"> Illuminate\View\</span><span style="color:#4ec9b0">View</span><span style="color:#cccccc">;</span></div>
<div class="ln" style="left:8px;top:224px;color:#6e7681">11</div>
<div class="ln" style="left:8px;top:246px;color:#6e7681">12</div>
<div class="code" style="left:74px;top:246px"><span style="color:#569cd6">class</span> <span style="color:#4ec9b0">AuthenticatedSessionController</span> <span style="color:#569cd6">extends</span> <span style="color:#4ec9b0">Controller</span></div>
<div class="ln" style="left:8px;top:268px;color:#6e7681">13</div>
<div class="code" style="left:74px;top:268px"><span style="color:#ffd700">{</span></div>
<div class="ln" style="left:8px;top:290px;color:#6e7681">14</div>
<div class="code" style="left:74px;top:290px"><span style="color:#6a9955">    /**</span></div>
<div class="ln" style="left:8px;top:312px;color:#6e7681">15</div>
<div class="code" style="left:74px;top:312px"><span style="color:#6a9955">     * Display the login view.</span></div>
<div class="ln" style="left:8px;top:334px;color:#6e7681">16</div>
<div class="code" style="left:74px;top:334px"><span style="color:#6a9955">     */</span></div>
<div class="ln" style="left:8px;top:356px;color:#6e7681">17</div>
<div class="code" style="left:74px;top:356px">    <span style="color:#569cd6">public</span> <span style="color:#569cd6">function</span> <span style="color:#dcdcaa">create</span><span style="color:#da70d6">()</span><span style="color:#cccccc">: </span><span style="color:#4ec9b0">View</span></div>
<div class="ln" style="left:8px;top:378px;color:#6e7681">18</div>
<div class="code" style="left:74px;top:378px">    <span style="color:#da70d6">{</span></div>
<div class="ln" style="left:8px;top:400px;color:#6e7681">19</div>
<div class="code" style="left:74px;top:400px">        <span style="color:#c586c0">return</span> <span style="color:#dcdcaa">view</span><span style="color:#179fff">(</span><span style="color:#ce9178">&#x27;</span><span style="color:#ce9178;text-decoration:underline;text-underline-offset:3px">auth.login</span><span style="color:#ce9178">&#x27;</span><span style="color:#179fff">)</span><span style="color:#cccccc">;</span></div>
<div class="ln" style="left:8px;top:422px;color:#6e7681">20</div>
<div class="code" style="left:74px;top:422px">    <span style="color:#da70d6">}</span></div>
<div class="ln" style="left:8px;top:444px;color:#6e7681">21</div>
<div class="ln" style="left:8px;top:466px;color:#6e7681">22</div>
<div class="code" style="left:74px;top:466px"><span style="color:#6a9955">    /**</span></div>
<div class="ln" style="left:8px;top:488px;color:#6e7681">23</div>
<div class="code" style="left:74px;top:488px"><span style="color:#6a9955">     * Handle an incoming authentication request.</span></div>
<div class="ln" style="left:8px;top:510px;color:#6e7681">24</div>
<div class="code" style="left:74px;top:510px"><span style="color:#6a9955">     */</span></div>
<div class="ln" style="left:8px;top:532px;color:#6e7681">25</div>
<div class="code" style="left:74px;top:532px">    <span style="color:#569cd6">public</span> <span style="color:#569cd6">function</span> <span style="color:#dcdcaa">store</span><span style="color:#da70d6">(</span><span style="color:#4ec9b0">LoginRequest</span> <span style="color:#9cdcfe">$request</span><span style="color:#da70d6">)</span><span style="color:#cccccc">: </span><span style="color:#4ec9b0">RedirectResponse</span></div>
<div class="ln" style="left:8px;top:554px;color:#6e7681">26</div>
<div class="code" style="left:74px;top:554px">    <span style="color:#da70d6">{</span></div>
<div class="ln" style="left:8px;top:576px;color:#6e7681">27</div>
<div class="code" style="left:74px;top:576px">        <span style="color:#9cdcfe">$request</span><span style="color:#cccccc">-&gt;</span><span style="color:#dcdcaa">authenticate</span><span style="color:#179fff">()</span><span style="color:#cccccc">;</span></div>
<div class="ln" style="left:8px;top:598px;color:#6e7681">28</div>
<div class="ln" style="left:8px;top:620px;color:#6e7681">29</div>
<div class="code" style="left:74px;top:620px">        <span style="color:#9cdcfe">$request</span><span style="color:#cccccc">-&gt;</span><span style="color:#dcdcaa">session</span><span style="color:#179fff">()</span><span style="color:#cccccc">-&gt;</span><span style="color:#dcdcaa">regenerate</span><span style="color:#179fff">()</span><span style="color:#cccccc">;</span></div>
<div class="ln" style="left:8px;top:642px;color:#6e7681">30</div>
<div class="ln" style="left:8px;top:664px;color:#6e7681">31</div>
<div class="code" style="left:74px;top:664px">        <span style="color:#c586c0">return</span> <span style="color:#dcdcaa">redirect</span><span style="color:#179fff">()</span><span style="color:#cccccc">-&gt;</span><span style="color:#dcdcaa">intended</span><span style="color:#179fff">(</span><span style="color:#dcdcaa">route</span><span style="color:#ffd700">(</span><span style="color:#ce9178">&#x27;dashboard&#x27;</span><span style="color:#cccccc">, </span><span style="color:#9cdcfe">absolute</span><span style="color:#cccccc">: </span><span style="color:#569cd6">false</span><span style="color:#ffd700">)</span><span style="color:#179fff">)</span><span style="color:#cccccc">;</span></div>
</div>
<svg class="a" style="left:1244px;top:92px" width="108" height="652" viewBox="1244 92 108 652" shape-rendering="crispEdges"><rect x="1252" y="92" width="1" height="2" fill="#569cd6" opacity=".5"/><rect x="1253" y="92" width="1" height="2" fill="#569cd6" opacity=".5"/><rect x="1254" y="92" width="1" height="1" fill="#569cd6" opacity=".25"/><rect x="1254" y="93" width="1" height="1" fill="#569cd6" opacity=".55"/><rect x="1255" y="92" width="1" height="2" fill="#569cd6" opacity=".5"/><rect x="1256" y="92" width="1" height="1" fill="#569cd6" opacity=".25"/><rect x="1256" y="93" width="1" height="1" fill="#569cd6" opacity=".55"/><rect x="1252" y="96" width="1" height="1" fill="#569cd6" opacity=".25"/><rect x="1252" y="97" width="1" height="1" fill="#569cd6" opacity=".55"/><rect x="1253" y="96" width="1" height="1" fill="#569cd6" opacity=".25"/><rect x="1253" y="97" width="1" height="1" fill="#569cd6" opacity=".55"/><rect x="1254" y="96" width="1" height="1" fill="#569cd6" opacity=".25"/><rect x="1254" y="97" width="1" height="1" fill="#569cd6" opacity=".55"/><rect x="1255" y="96" width="1" height="1" fill="#569cd6" opacity=".25"/><rect x="1255" y="97" width="1" height="1" fill="#569cd6" opacity=".55"/><rect x="1256" y="96" width="1" height="1" fill="#569cd6" opacity=".25"/><rect x="1256" y="97" width="1" height="1" fill="#569cd6" opacity=".55"/><rect x="1257" y="96" width="1" height="1" fill="#569cd6" opacity=".25"/><rect x="1257" y="97" width="1" height="1" fill="#569cd6" opacity=".55"/><rect x="1258" y="96" width="1" height="1" fill="#569cd6" opacity=".25"/><rect x="1258" y="97" width="1" height="1" fill="#569cd6" opacity=".55"/><rect x="1259" y="96" width="1" height="1" fill="#569cd6" opacity=".25"/><rect x="1259" y="97" width="1" height="1" fill="#569cd6" opacity=".55"/><rect x="1260" y="96" width="1" height="1" fill="#569cd6" opacity=".25"/><rect x="1260" y="97" width="1" height="1" fill="#569cd6" opacity=".55"/><rect x="1262" y="96" width="1" height="2" fill="#4ec9b0" opacity=".5"/><rect x="1263" y="96" width="1" height="1" fill="#4ec9b0" opacity=".25"/><rect x="1263" y="97" width="1" height="1" fill="#4ec9b0" opacity=".55"/><rect x="1264" y="96" width="1" height="1" fill="#4ec9b0" opacity=".25"/><rect x="1264" y="97" width="1" height="1" fill="#4ec9b0" opacity=".55"/><rect x="1265" y="96" width="1" height="2" fill="#4ec9b0" opacity=".25"/><rect x="1266" y="96" width="1" height="2" fill="#4ec9b0" opacity=".5"/><rect x="1267" y="96" width="1" height="2" fill="#4ec9b0" opacity=".5"/><rect x="1268" y="96" width="1" height="2" fill="#4ec9b0" opacity=".5"/><rect x="1269" y="96" width="1" height="1" fill="#4ec9b0" opacity=".25"/><rect x="1269" y="97" width="1" height="1" fill="#4ec9b0" opacity=".55"/><rect x="1270" y="96" width="1" height="2" fill="#4ec9b0" opacity=".25"/><rect x="1271" y="96" width="1" height="2" fill="#4ec9b0" opacity=".5"/><rect x="1272" y="96" width="1" height="1" fill="#4ec9b0" opacity=".25"/><rect x="1272" y="97" width="1" height="1" fill="#4ec9b0" opacity=".55"/><rect x="1273" y="96" width="1" height="1" fill="#4ec9b0" opacity=".25"/><rect x="1273" y="97" width="1" height="1" fill="#4ec9b0" opacity=".55"/><rect x="1274" y="96" width="1" height="2" fill="#4ec9b0" opacity=".5"/><rect x="1275" y="96" width="1" height="1" fill="#4ec9b0" opacity=".25"/><rect x="1275" y="97" width="1" height="1" fill="#4ec9b0" opacity=".55"/><rect x="1276" y="96" width="1" height="1" fill="#4ec9b0" opacity=".25"/><rect x="1276" y="97" width="1" height="1" fill="#4ec9b0" opacity=".55"/><rect x="1277" y="96" width="1" height="2" fill="#4ec9b0" opacity=".5"/><rect x="1278" y="96" width="1" height="2" fill="#4ec9b0" opacity=".5"/><rect x="1279" y="96" width="1" height="1" fill="#4ec9b0" opacity=".25"/><rect x="1279" y="97" width="1" height="1" fill="#4ec9b0" opacity=".55"/><rect x="1280" y="96" width="1" height="1" fill="#4ec9b0" opacity=".25"/><rect x="1280" y="97" width="1" height="1" fill="#4ec9b0" opacity=".55"/><rect x="1281" y="96" width="1" height="1" fill="#4ec9b0" opacity=".25"/><rect x="1281" y="97" width="1" height="1" fill="#4ec9b0" opacity=".55"/><rect x="1282" y="96" width="1" height="2" fill="#4ec9b0" opacity=".25"/><rect x="1283" y="96" width="1" height="2" fill="#4ec9b0" opacity=".5"/><rect x="1284" y="96" width="1" height="1" fill="#4ec9b0" opacity=".25"/><rect x="1284" y="97" width="1" height="1" fill="#4ec9b0" opacity=".55"/><rect x="1285" y="96" width="1" height="2" fill="#4ec9b0" opacity=".5"/><rect x="1286" y="96" width="1" height="2" fill="#4ec9b0" opacity=".5"/><rect x="1287" y="97" width="1" height="1" fill="#cccccc" opacity=".35"/><rect x="1252" y="100" width="1" height="1" fill="#569cd6" opacity=".25"/><rect x="1252" y="101" width="1" height="1" fill="#569cd6" opacity=".55"/><rect x="1253" y="100" width="1" height="1" fill="#569cd6" opacity=".25"/><rect x="1253" y="101" width="1" height="1" fill="#569cd6" opacity=".55"/><rect x="1254" y="100" width="1" height="1" fill="#569cd6" opacity=".25"/><rect x="1254" y="101" width="1" height="1" fill="#569cd6" opacity=".55"/><rect x="1256" y="100" width="1" height="2" fill="#cccccc" opacity=".5"/><rect x="1257" y="100" width="1" height="1" fill="#cccccc" opacity=".25"/><rect x="1257" y="101" width="1" height="1" fill="#cccccc" opacity=".55"/><rect x="1258" y="100" width="1" height="1" fill="#cccccc" opacity=".25"/><rect x="1258" y="101" width="1" height="1" fill="#cccccc" opacity=".55"/><rect x="1259" y="100" width="1" height="2" fill="#cccccc" opacity=".25"/><rect x="1260" y="100" width="1" height="2" fill="#cccccc" opacity=".5"/><rect x="1261" y="100" width="1" height="2" fill="#cccccc" opacity=".5"/><rect x="1262" y="100" width="1" height="2" fill="#cccccc" opacity=".5"/><rect x="1263" y="100" width="1" height="1" fill="#cccccc" opacity=".25"/><rect x="1263" y="101" width="1" height="1" fill="#cccccc" opacity=".55"/><rect x="1264" y="100" width="1" height="2" fill="#cccccc" opacity=".25"/><rect x="1265" y="100" width="1" height="2" fill="#cccccc" opacity=".5"/><rect x="1266" y="100" width="1" height="1" fill="#cccccc" opacity=".25"/><rect x="1266" y="101" width="1" height="1" fill="#cccccc" opacity=".55"/><rect x="1267" y="100" width="1" height="1" fill="#cccccc" opacity=".25"/><rect x="1267" y="101" width="1" height="1" fill="#cccccc" opacity=".55"/><rect x="1268" y="100" width="1" height="2" fill="#cccccc" opacity=".5"/><rect x="1269" y="100" width="1" height="1" fill="#cccccc" opacity=".25"/><rect x="1269" y="101" width="1" height="1" fill="#cccccc" opacity=".55"/><rect x="1270" y="100" width="1" height="1" fill="#cccccc" opacity=".25"/><rect x="1270" y="101" width="1" height="1" fill="#cccccc" opacity=".55"/><rect x="1271" y="100" width="1" height="2" fill="#cccccc" opacity=".5"/><rect x="1272" y="100" width="1" height="2" fill="#cccccc" opacity=".5"/><rect x="1273" y="100" width="1" height="1" fill="#cccccc" opacity=".25"/><rect x="1273" y="101" width="1" height="1" fill="#cccccc" opacity=".55"/><rect x="1274" y="100" width="1" height="1" fill="#cccccc" opacity=".25"/><rect x="1274" y="101" width="1" height="1" fill="#cccccc" opacity=".55"/><rect x="1275" y="100" width="1" height="1" fill="#cccccc" opacity=".25"/><rect x="1275" y="101" width="1" height="1" fill="#cccccc" opacity=".55"/><rect x="1276" y="100" width="1" height="2" fill="#cccccc" opacity=".25"/><rect x="1277" y="100" width="1" height="2" fill="#4ec9b0" opacity=".5"/><rect x="1278" y="100" width="1" height="1" fill="#4ec9b0" opacity=".25"/><rect x="1278" y="101" width="1" height="1" fill="#4ec9b0" opacity=".55"/><rect x="1279" y="100" width="1" height="1" fill="#4ec9b0" opacity=".25"/><rect x="1279" y="101" width="1" height="1" fill="#4ec9b0" opacity=".55"/><rect x="1280" y="100" width="1" height="2" fill="#4ec9b0" opacity=".5"/><rect x="1281" y="100" width="1" height="1" fill="#4ec9b0" opacity=".25"/><rect x="1281" y="101" width="1" height="1" fill="#4ec9b0" opacity=".55"/><rect x="1282" y="100" width="1" height="1" fill="#4ec9b0" opacity=".25"/><rect x="1282" y="101" width="1" height="1" fill="#4ec9b0" opacity=".55"/><rect x="1283" y="100" width="1" height="2" fill="#4ec9b0" opacity=".5"/><rect x="1284" y="100" width="1" height="2" fill="#4ec9b0" opacity=".5"/><rect x="1285" y="100" width="1" height="1" fill="#4ec9b0" opacity=".25"/><rect x="1285" y="101" width="1" height="1" fill="#4ec9b0" opacity=".55"/><rect x="1286" y="100" width="1" height="1" fill="#4ec9b0" opacity=".25"/><rect x="1286" y="101" width="1" height="1" fill="#4ec9b0" opacity=".55"/><rect x="1287" y="101" width="1" height="1" fill="#cccccc" opacity=".35"/><rect x="1252" y="102" width="1" height="1" fill="#569cd6" opacity=".25"/><rect x="1252" y="103" width="1" height="1" fill="#569cd6" opacity=".55"/><rect x="1253" y="102" width="1" height="1" fill="#569cd6" opacity=".25"/><rect x="1253" y="103" width="1" height="1" fill="#569cd6" opacity=".55"/><rect x="1254" y="102" width="1" height="1" fill="#569cd6" opacity=".25"/><rect x="1254" y="103" width="1" height="1" fill="#569cd6" opacity=".55"/><rect x="1256" y="102" width="1" height="2" fill="#cccccc" opacity=".5"/><rect x="1257" y="102" width="1" height="1" fill="#cccccc" opacity=".25"/><rect x="1257" y="103" width="1" height="1" fill="#cccccc" opacity=".55"/><rect x="1258" y="102" width="1" height="1" fill="#cccccc" opacity=".25"/><rect x="1258" y="103" width="1" height="1" fill="#cccccc" opacity=".55"/><rect x="1259" y="102" width="1" height="2" fill="#cccccc" opacity=".25"/><rect x="1260" y="102" width="1" height="2" fill="#cccccc" opacity=".5"/><rect x="1261" y="102" width="1" height="2" fill="#cccccc" opacity=".5"/><rect x="1262" y="102" width="1" height="2" fill="#cccccc" opacity=".5"/><rect x="1263" y="102" width="1" height="1" fill="#cccccc" opacity=".25"/><rect x="1263" y="103" width="1" height="1" fill="#cccccc" opacity=".55"/><rect x="1264" y="102" width="1" height="2" fill="#cccccc" opacity=".25"/><rect x="1265" y="102" width="1" height="2" fill="#cccccc" opacity=".5"/><rect x="1266" y="102" width="1" height="1" fill="#cccccc" opacity=".25"/><rect x="1266" y="103" width="1" height="1" fill="#cccccc" opacity=".55"/><rect x="1267" y="102" width="1" height="1" fill="#cccccc" opacity=".25"/><rect x="1267" y="103" width="1" height="1" fill="#cccccc" opacity=".55"/><rect x="1268" y="102" width="1" height="1" fill="#cccccc" opacity=".25"/><rect x="1268" y="103" width="1" height="1" fill="#cccccc" opacity=".55"/><rect x="1269" y="102" width="1" height="1" fill="#cccccc" opacity=".25"/><rect x="1269" y="103" width="1" height="1" fill="#cccccc" opacity=".55"/><rect x="1270" y="102" width="1" height="1" fill="#cccccc" opacity=".25"/><rect x="1270" y="103" width="1" height="1" fill="#cccccc" opacity=".55"/><rect x="1271" y="102" width="1" height="2" fill="#cccccc" opacity=".5"/><rect x="1272" y="102" width="1" height="1" fill="#cccccc" opacity=".25"/><rect x="1272" y="103" width="1" height="1" fill="#cccccc" opacity=".55"/><rect x="1273" y="102" width="1" height="2" fill="#cccccc" opacity=".25"/><rect x="1274" y="102" width="1" height="2" fill="#cccccc" opacity=".5"/><rect x="1275" y="102" width="1" height="1" fill="#cccccc" opacity=".25"/><rect x="1275" y="103" width="1" height="1" fill="#cccccc" opacity=".55"/><rect x="1276" y="102" width="1" height="2" fill="#cccccc" opacity=".5"/><rect x="1277" y="102" width="1" height="2" fill="#cccccc" opacity=".5"/><rect x="1278" y="102" width="1" height="2" fill="#cccccc" opacity=".25"/><rect x="1279" y="102" width="1" height="2" fill="#4ec9b0" opacity=".5"/><rect x="1280" y="102" width="1" height="1" fill="#4ec9b0" opacity=".25"/><rect x="1280" y="103" width="1" height="1" fill="#4ec9b0" opacity=".55"/><rect x="1281" y="102" width="1" height="1" fill="#4ec9b0" opacity=".25"/><rect x="1281" y="103" width="1" height="1" fill="#4ec9b0" opacity=".55"/><rect x="1282" y="102" width="1" height="1" fill="#4ec9b0" opacity=".25"/><rect x="1282" y="103" width="1" height="1" fill="#4ec9b0" opacity=".55"/><rect x="1283" y="102" width="1" height="1" fill="#4ec9b0" opacity=".25"/><rect x="1283" y="103" width="1" height="1" fill="#4ec9b0" opacity=".55"/><rect x="1284" y="102" width="1" height="2" fill="#4ec9b0" opacity=".5"/><rect x="1285" y="102" width="1" height="1" fill="#4ec9b0" opacity=".25"/><rect x="1285" y="103" width="1" height="1" fill="#4ec9b0" opacity=".55"/><rect x="1286" y="102" width="1" height="1" fill="#4ec9b0" opacity=".25"/><rect x="1286" y="103" width="1" height="1" fill="#4ec9b0" opacity=".55"/><rect x="1287" y="102" width="1" height="1" fill="#4ec9b0" opacity=".25"/><rect x="1287" y="103" width="1" height="1" fill="#4ec9b0" opacity=".55"/><rect x="1288" y="102" width="1" height="1" fill="#4ec9b0" opacity=".25"/><rect x="1288" y="103" width="1" height="1" fill="#4ec9b0" opacity=".55"/><rect x="1289" y="102" width="1" height="1" fill="#4ec9b0" opacity=".25"/><rect x="1289" y="103" width="1" height="1" fill="#4ec9b0" opacity=".55"/><rect x="1290" y="102" width="1" height="2" fill="#4ec9b0" opacity=".5"/><rect x="1291" y="103" width="1" height="1" fill="#cccccc" opacity=".35"/><rect x="1252" y="104" width="1" height="1" fill="#569cd6" opacity=".25"/><rect x="1252" y="105" width="1" height="1" fill="#569cd6" opacity=".55"/><rect x="1253" y="104" width="1" height="1" fill="#569cd6" opacity=".25"/><rect x="1253" y="105" width="1" height="1" fill="#569cd6" opacity=".55"/><rect x="1254" y="104" width="1" height="1" fill="#569cd6" opacity=".25"/><rect x="1254" y="105" width="1" height="1" fill="#569cd6" opacity=".55"/><rect x="1256" y="104" width="1" height="2" fill="#cccccc" opacity=".5"/><rect x="1257" y="104" width="1" height="2" fill="#cccccc" opacity=".5"/><rect x="1258" y="104" width="1" height="2" fill="#cccccc" opacity=".5"/><rect x="1259" y="104" width="1" height="1" fill="#cccccc" opacity=".25"/><rect x="1259" y="105" width="1" height="1" fill="#cccccc" opacity=".55"/><rect x="1260" y="104" width="1" height="1" fill="#cccccc" opacity=".25"/><rect x="1260" y="105" width="1" height="1" fill="#cccccc" opacity=".55"/><rect x="1261" y="104" width="1" height="1" fill="#cccccc" opacity=".25"/><rect x="1261" y="105" width="1" height="1" fill="#cccccc" opacity=".55"/><rect x="1262" y="104" width="1" height="1" fill="#cccccc" opacity=".25"/><rect x="1262" y="105" width="1" height="1" fill="#cccccc" opacity=".55"/><rect x="1263" y="104" width="1" height="1" fill="#cccccc" opacity=".25"/><rect x="1263" y="105" width="1" height="1" fill="#cccccc" opacity=".55"/><rect x="1264" y="104" width="1" height="2" fill="#cccccc" opacity=".5"/><rect x="1265" y="104" width="1" height="1" fill="#cccccc" opacity=".25"/><rect x="1265" y="105" width="1" height="1" fill="#cccccc" opacity=".55"/><rect x="1266" y="104" width="1" height="2" fill="#cccccc" opacity=".25"/><rect x="1267" y="104" width="1" height="2" fill="#cccccc" opacity=".5"/><rect x="1268" y="104" width="1" height="2" fill="#cccccc" opacity=".5"/><rect x="1269" y="104" width="1" height="2" fill="#cccccc" opacity=".5"/><rect x="1270" y="104" width="1" height="1" fill="#cccccc" opacity=".25"/><rect x="1270" y="105" width="1" height="1" fill="#cccccc" opacity=".55"/><rect x="1271" y="104" width="1" height="2" fill="#cccccc" opacity=".25"/><rect x="1272" y="104" width="1" height="2" fill="#4ec9b0" opacity=".5"/><rect x="1273" y="104" width="1" height="1" fill="#4ec9b0" opacity=".25"/><rect x="1273" y="105" width="1" height="1" fill="#4ec9b0" opacity=".55"/><rect x="1274" y="104" width="1" height="2" fill="#4ec9b0" opacity=".5"/><rect x="1275" y="104" width="1" height="1" fill="#4ec9b0" opacity=".25"/><rect x="1275" y="105" width="1" height="1" fill="#4ec9b0" opacity=".55"/><rect x="1276" y="104" width="1" height="1" fill="#4ec9b0" opacity=".25"/><rect x="1276" y="105" width="1" height="1" fill="#4ec9b0" opacity=".55"/><rect x="1277" y="104" width="1" height="1" fill="#4ec9b0" opacity=".25"/><rect x="1277" y="105" width="1" height="1" fill="#4ec9b0" opacity=".55"/><rect x="1278" y="104" width="1" height="1" fill="#4ec9b0" opacity=".25"/><rect x="1278" y="105" width="1" height="1" fill="#4ec9b0" opacity=".55"/><rect x="1279" y="104" width="1" height="2" fill="#4ec9b0" opacity=".5"/><rect x="1280" y="104" width="1" height="2" fill="#4ec9b0" opacity=".5"/><rect x="1281" y="104" width="1" height="1" fill="#4ec9b0" opacity=".25"/><rect x="1281" y="105" width="1" height="1" fill="#4ec9b0" opacity=".55"/><rect x="1282" y="104" width="1" height="1" fill="#4ec9b0" opacity=".25"/><rect x="1282" y="105" width="1" height="1" fill="#4ec9b0" opacity=".55"/><rect x="1283" y="104" width="1" height="1" fill="#4ec9b0" opacity=".25"/><rect x="1283" y="105" width="1" height="1" fill="#4ec9b0" opacity=".55"/><rect x="1284" y="104" width="1" height="1" fill="#4ec9b0" opacity=".25"/><rect x="1284" y="105" width="1" height="1" fill="#4ec9b0" opacity=".55"/><rect x="1285" y="104" width="1" height="1" fill="#4ec9b0" opacity=".25"/><rect x="1285" y="105" width="1" height="1" fill="#4ec9b0" opacity=".55"/><rect x="1286" y="104" width="1" height="1" fill="#4ec9b0" opacity=".25"/><rect x="1286" y="105" width="1" height="1" fill="#4ec9b0" opacity=".55"/><rect x="1287" y="104" width="1" height="1" fill="#4ec9b0" opacity=".25"/><rect x="1287" y="105" width="1" height="1" fill="#4ec9b0" opacity=".55"/><rect x="1288" y="105" width="1" height="1" fill="#cccccc" opacity=".35"/><rect x="1252" y="106" width="1" height="1" fill="#569cd6" opacity=".25"/><rect x="1252" y="107" width="1" height="1" fill="#569cd6" opacity=".55"/><rect x="1253" y="106" width="1" height="1" fill="#569cd6" opacity=".25"/><rect x="1253" y="107" width="1" height="1" fill="#569cd6" opacity=".55"/><rect x="1254" y="106" width="1" height="1" fill="#569cd6" opacity=".25"/><rect x="1254" y="107" width="1" height="1" fill="#569cd6" opacity=".55"/><rect x="1256" y="106" width="1" height="2" fill="#cccccc" opacity=".5"/><rect x="1257" y="106" width="1" height="2" fill="#cccccc" opacity=".5"/><rect x="1258" y="106" width="1" height="2" fill="#cccccc" opacity=".5"/><rect x="1259" y="106" width="1" height="1" fill="#cccccc" opacity=".25"/><rect x="1259" y="107" width="1" height="1" fill="#cccccc" opacity=".55"/><rect x="1260" y="106" width="1" height="1" fill="#cccccc" opacity=".25"/><rect x="1260" y="107" width="1" height="1" fill="#cccccc" opacity=".55"/><rect x="1261" y="106" width="1" height="1" fill="#cccccc" opacity=".25"/><rect x="1261" y="107" width="1" height="1" fill="#cccccc" opacity=".55"/><rect x="1262" y="106" width="1" height="1" fill="#cccccc" opacity=".25"/><rect x="1262" y="107" width="1" height="1" fill="#cccccc" opacity=".55"/><rect x="1263" y="106" width="1" height="1" fill="#cccccc" opacity=".25"/><rect x="1263" y="107" width="1" height="1" fill="#cccccc" opacity=".55"/><rect x="1264" y="106" width="1" height="2" fill="#cccccc" opacity=".5"/><rect x="1265" y="106" width="1" height="1" fill="#cccccc" opacity=".25"/><rect x="1265" y="107" width="1" height="1" fill="#cccccc" opacity=".55"/><rect x="1266" y="106" width="1" height="2" fill="#cccccc" opacity=".25"/><rect x="1267" y="106" width="1" height="2" fill="#cccccc" opacity=".5"/><rect x="1268" y="106" width="1" height="2" fill="#cccccc" opacity=".5"/><rect x="1269" y="106" width="1" height="2" fill="#cccccc" opacity=".5"/><rect x="1270" y="106" width="1" height="1" fill="#cccccc" opacity=".25"/><rect x="1270" y="107" width="1" height="1" fill="#cccccc" opacity=".55"/><rect x="1271" y="106" width="1" height="2" fill="#cccccc" opacity=".25"/><rect x="1272" y="106" width="1" height="2" fill="#4ec9b0" opacity=".5"/><rect x="1273" y="106" width="1" height="1" fill="#4ec9b0" opacity=".25"/><rect x="1273" y="107" width="1" height="1" fill="#4ec9b0" opacity=".55"/><rect x="1274" y="106" width="1" height="1" fill="#4ec9b0" opacity=".25"/><rect x="1274" y="107" width="1" height="1" fill="#4ec9b0" opacity=".55"/><rect x="1275" y="106" width="1" height="1" fill="#4ec9b0" opacity=".25"/><rect x="1275" y="107" width="1" height="1" fill="#4ec9b0" opacity=".55"/><rect x="1276" y="106" width="1" height="1" fill="#4ec9b0" opacity=".25"/><rect x="1276" y="107" width="1" height="1" fill="#4ec9b0" opacity=".55"/><rect x="1277" y="106" width="1" height="1" fill="#4ec9b0" opacity=".25"/><rect x="1277" y="107" width="1" height="1" fill="#4ec9b0" opacity=".55"/><rect x="1278" y="106" width="1" height="2" fill="#4ec9b0" opacity=".5"/><rect x="1279" y="107" width="1" height="1" fill="#cccccc" opacity=".35"/><rect x="1252" y="108" width="1" height="1" fill="#569cd6" opacity=".25"/><rect x="1252" y="109" width="1" height="1" fill="#569cd6" opacity=".55"/><rect x="1253" y="108" width="1" height="1" fill="#569cd6" opacity=".25"/><rect x="1253" y="109" width="1" height="1" fill="#569cd6" opacity=".55"/><rect x="1254" y="108" width="1" height="1" fill="#569cd6" opacity=".25"/><rect x="1254" y="109" width="1" height="1" fill="#569cd6" opacity=".55"/><rect x="1256" y="108" width="1" height="2" fill="#cccccc" opacity=".5"/><rect x="1257" y="108" width="1" height="2" fill="#cccccc" opacity=".5"/><rect x="1258" y="108" width="1" height="2" fill="#cccccc" opacity=".5"/><rect x="1259" y="108" width="1" height="1" fill="#cccccc" opacity=".25"/><rect x="1259" y="109" width="1" height="1" fill="#cccccc" opacity=".55"/><rect x="1260" y="108" width="1" height="1" fill="#cccccc" opacity=".25"/><rect x="1260" y="109" width="1" height="1" fill="#cccccc" opacity=".55"/><rect x="1261" y="108" width="1" height="1" fill="#cccccc" opacity=".25"/><rect x="1261" y="109" width="1" height="1" fill="#cccccc" opacity=".55"/><rect x="1262" y="108" width="1" height="1" fill="#cccccc" opacity=".25"/><rect x="1262" y="109" width="1" height="1" fill="#cccccc" opacity=".55"/><rect x="1263" y="108" width="1" height="1" fill="#cccccc" opacity=".25"/><rect x="1263" y="109" width="1" height="1" fill="#cccccc" opacity=".55"/><rect x="1264" y="108" width="1" height="2" fill="#cccccc" opacity=".5"/><rect x="1265" y="108" width="1" height="1" fill="#cccccc" opacity=".25"/><rect x="1265" y="109" width="1" height="1" fill="#cccccc" opacity=".55"/><rect x="1266" y="108" width="1" height="2" fill="#cccccc" opacity=".25"/><rect x="1267" y="108" width="1" height="2" fill="#cccccc" opacity=".5"/><rect x="1268" y="108" width="1" height="1" fill="#cccccc" opacity=".25"/><rect x="1268" y="109" width="1" height="1" fill="#cccccc" opacity=".55"/><rect x="1269" y="108" width="1" height="1" fill="#cccccc" opacity=".25"/><rect x="1269" y="109" width="1" height="1" fill="#cccccc" opacity=".55"/><rect x="1270" y="108" width="1" height="1" fill="#cccccc" opacity=".25"/><rect x="1270" y="109" width="1" height="1" fill="#cccccc" opacity=".55"/><rect x="1271" y="108" width="1" height="1" fill="#cccccc" opacity=".25"/><rect x="1271" y="109" width="1" height="1" fill="#cccccc" opacity=".55"/><rect x="1272" y="108" width="1" height="1" fill="#cccccc" opacity=".25"/><rect x="1272" y="109" width="1" height="1" fill="#cccccc" opacity=".55"/><rect x="1273" y="108" width="1" height="2" fill="#cccccc" opacity=".5"/><rect x="1274" y="108" width="1" height="2" fill="#cccccc" opacity=".25"/><rect x="1275" y="108" width="1" height="2" fill="#cccccc" opacity=".5"/><rect x="1276" y="108" width="1" height="1" fill="#cccccc" opacity=".25"/><rect x="1276" y="109" width="1" height="1" fill="#cccccc" opacity=".55"/><rect x="1277" y="108" width="1" height="1" fill="#cccccc" opacity=".25"/><rect x="1277" y="109" width="1" height="1" fill="#cccccc" opacity=".55"/><rect x="1278" y="108" width="1" height="1" fill="#cccccc" opacity=".25"/><rect x="1278" y="109" width="1" height="1" fill="#cccccc" opacity=".55"/><rect x="1279" y="108" width="1" height="2" fill="#cccccc" opacity=".5"/><rect x="1280" y="108" width="1" height="1" fill="#cccccc" opacity=".25"/><rect x="1280" y="109" width="1" height="1" fill="#cccccc" opacity=".55"/><rect x="1281" y="108" width="1" height="1" fill="#cccccc" opacity=".25"/><rect x="1281" y="109" width="1" height="1" fill="#cccccc" opacity=".55"/><rect x="1282" y="108" width="1" height="2" fill="#cccccc" opacity=".25"/><rect x="1283" y="108" width="1" height="2" fill="#4ec9b0" opacity=".5"/><rect x="1284" y="108" width="1" height="1" fill="#4ec9b0" opacity=".25"/><rect x="1284" y="109" width="1" height="1" fill="#4ec9b0" opacity=".55"/><rect x="1285" y="108" width="1" height="2" fill="#4ec9b0" opacity=".5"/><rect x="1286" y="108" width="1" height="2" fill="#4ec9b0" opacity=".5"/><rect x="1287" y="109" width="1" height="1" fill="#cccccc" opacity=".35"/><rect x="1252" y="110" width="1" height="1" fill="#569cd6" opacity=".25"/><rect x="1252" y="111" width="1" height="1" fill="#569cd6" opacity=".55"/><rect x="1253" y="110" width="1" height="1" fill="#569cd6" opacity=".25"/><rect x="1253" y="111" width="1" height="1" fill="#569cd6" opacity=".55"/><rect x="1254" y="110" width="1" height="1" fill="#569cd6" opacity=".25"/><rect x="1254" y="111" width="1" height="1" fill="#569cd6" opacity=".55"/><rect x="1256" y="110" width="1" height="2" fill="#cccccc" opacity=".5"/><rect x="1257" y="110" width="1" height="2" fill="#cccccc" opacity=".5"/><rect x="1258" y="110" width="1" height="2" fill="#cccccc" opacity=".5"/><rect x="1259" y="110" width="1" height="1" fill="#cccccc" opacity=".25"/><rect x="1259" y="111" width="1" height="1" fill="#cccccc" opacity=".55"/><rect x="1260" y="110" width="1" height="1" fill="#cccccc" opacity=".25"/><rect x="1260" y="111" width="1" height="1" fill="#cccccc" opacity=".55"/><rect x="1261" y="110" width="1" height="1" fill="#cccccc" opacity=".25"/><rect x="1261" y="111" width="1" height="1" fill="#cccccc" opacity=".55"/><rect x="1262" y="110" width="1" height="1" fill="#cccccc" opacity=".25"/><rect x="1262" y="111" width="1" height="1" fill="#cccccc" opacity=".55"/><rect x="1263" y="110" width="1" height="1" fill="#cccccc" opacity=".25"/><rect x="1263" y="111" width="1" height="1" fill="#cccccc" opacity=".55"/><rect x="1264" y="110" width="1" height="2" fill="#cccccc" opacity=".5"/><rect x="1265" y="110" width="1" height="1" fill="#cccccc" opacity=".25"/><rect x="1265" y="111" width="1" height="1" fill="#cccccc" opacity=".55"/><rect x="1266" y="110" width="1" height="2" fill="#cccccc" opacity=".25"/><rect x="1267" y="110" width="1" height="2" fill="#cccccc" opacity=".5"/><rect x="1268" y="110" width="1" height="1" fill="#cccccc" opacity=".25"/><rect x="1268" y="111" width="1" height="1" fill="#cccccc" opacity=".55"/><rect x="1269" y="110" width="1" height="1" fill="#cccccc" opacity=".25"/><rect x="1269" y="111" width="1" height="1" fill="#cccccc" opacity=".55"/><rect x="1270" y="110" width="1" height="1" fill="#cccccc" opacity=".25"/><rect x="1270" y="111" width="1" height="1" fill="#cccccc" opacity=".55"/><rect x="1271" y="110" width="1" height="2" fill="#cccccc" opacity=".25"/><rect x="1272" y="110" width="1" height="2" fill="#4ec9b0" opacity=".5"/><rect x="1273" y="110" width="1" height="1" fill="#4ec9b0" opacity=".25"/><rect x="1273" y="111" width="1" height="1" fill="#4ec9b0" opacity=".55"/><rect x="1274" y="110" width="1" height="1" fill="#4ec9b0" opacity=".25"/><rect x="1274" y="111" width="1" height="1" fill="#4ec9b0" opacity=".55"/><rect x="1275" y="110" width="1" height="1" fill="#4ec9b0" opacity=".25"/><rect x="1275" y="111" width="1" height="1" fill="#4ec9b0" opacity=".55"/><rect x="1276" y="111" width="1" height="1" fill="#cccccc" opacity=".35"/><rect x="1252" y="114" width="1" height="1" fill="#569cd6" opacity=".25"/><rect x="1252" y="115" width="1" height="1" fill="#569cd6" opacity=".55"/><rect x="1253" y="114" width="1" height="2" fill="#569cd6" opacity=".5"/><rect x="1254" y="114" width="1" height="1" fill="#569cd6" opacity=".25"/><rect x="1254" y="115" width="1" height="1" fill="#569cd6" opacity=".55"/><rect x="1255" y="114" width="1" height="1" fill="#569cd6" opacity=".25"/><rect x="1255" y="115" width="1" height="1" fill="#569cd6" opacity=".55"/><rect x="1256" y="114" width="1" height="1" fill="#569cd6" opacity=".25"/><rect x="1256" y="115" width="1" height="1" fill="#569cd6" opacity=".55"/><rect x="1258" y="114" width="1" height="2" fill="#4ec9b0" opacity=".5"/><rect x="1259" y="114" width="1" height="1" fill="#4ec9b0" opacity=".25"/><rect x="1259" y="115" width="1" height="1" fill="#4ec9b0" opacity=".55"/><rect x="1260" y="114" width="1" height="2" fill="#4ec9b0" opacity=".5"/><rect x="1261" y="114" width="1" height="2" fill="#4ec9b0" opacity=".5"/><rect x="1262" y="114" width="1" height="1" fill="#4ec9b0" opacity=".25"/><rect x="1262" y="115" width="1" height="1" fill="#4ec9b0" opacity=".55"/><rect x="1263" y="114" width="1" height="1" fill="#4ec9b0" opacity=".25"/><rect x="1263" y="115" width="1" height="1" fill="#4ec9b0" opacity=".55"/><rect x="1264" y="114" width="1" height="2" fill="#4ec9b0" opacity=".5"/><rect x="1265" y="114" width="1" height="1" fill="#4ec9b0" opacity=".25"/><rect x="1265" y="115" width="1" height="1" fill="#4ec9b0" opacity=".55"/><rect x="1266" y="114" width="1" height="1" fill="#4ec9b0" opacity=".25"/><rect x="1266" y="115" width="1" height="1" fill="#4ec9b0" opacity=".55"/><rect x="1267" y="114" width="1" height="1" fill="#4ec9b0" opacity=".25"/><rect x="1267" y="115" width="1" height="1" fill="#4ec9b0" opacity=".55"/><rect x="1268" y="114" width="1" height="2" fill="#4ec9b0" opacity=".5"/><rect x="1269" y="114" width="1" height="1" fill="#4ec9b0" opacity=".25"/><rect x="1269" y="115" width="1" height="1" fill="#4ec9b0" opacity=".55"/><rect x="1270" y="114" width="1" height="2" fill="#4ec9b0" opacity=".5"/><rect x="1271" y="114" width="1" height="2" fill="#4ec9b0" opacity=".5"/><rect x="1272" y="114" width="1" height="1" fill="#4ec9b0" opacity=".25"/><rect x="1272" y="115" width="1" height="1" fill="#4ec9b0" opacity=".55"/><rect x="1273" y="114" width="1" height="1" fill="#4ec9b0" opacity=".25"/><rect x="1273" y="115" width="1" height="1" fill="#4ec9b0" opacity=".55"/><rect x="1274" y="114" width="1" height="1" fill="#4ec9b0" opacity=".25"/><rect x="1274" y="115" width="1" height="1" fill="#4ec9b0" opacity=".55"/><rect x="1275" y="114" width="1" height="1" fill="#4ec9b0" opacity=".25"/><rect x="1275" y="115" width="1" height="1" fill="#4ec9b0" opacity=".55"/><rect x="1276" y="114" width="1" height="1" fill="#4ec9b0" opacity=".25"/><rect x="1276" y="115" width="1" height="1" fill="#4ec9b0" opacity=".55"/><rect x="1277" y="114" width="1" height="1" fill="#4ec9b0" opacity=".25"/><rect x="1277" y="115" width="1" height="1" fill="#4ec9b0" opacity=".55"/><rect x="1278" y="114" width="1" height="2" fill="#4ec9b0" opacity=".5"/><rect x="1279" y="114" width="1" height="1" fill="#4ec9b0" opacity=".25"/><rect x="1279" y="115" width="1" height="1" fill="#4ec9b0" opacity=".55"/><rect x="1280" y="114" width="1" height="1" fill="#4ec9b0" opacity=".25"/><rect x="1280" y="115" width="1" height="1" fill="#4ec9b0" opacity=".55"/><rect x="1281" y="114" width="1" height="2" fill="#4ec9b0" opacity=".5"/><rect x="1282" y="114" width="1" height="1" fill="#4ec9b0" opacity=".25"/><rect x="1282" y="115" width="1" height="1" fill="#4ec9b0" opacity=".55"/><rect x="1283" y="114" width="1" height="1" fill="#4ec9b0" opacity=".25"/><rect x="1283" y="115" width="1" height="1" fill="#4ec9b0" opacity=".55"/><rect x="1284" y="114" width="1" height="2" fill="#4ec9b0" opacity=".5"/><rect x="1285" y="114" width="1" height="2" fill="#4ec9b0" opacity=".5"/><rect x="1286" y="114" width="1" height="1" fill="#4ec9b0" opacity=".25"/><rect x="1286" y="115" width="1" height="1" fill="#4ec9b0" opacity=".55"/><rect x="1287" y="114" width="1" height="1" fill="#4ec9b0" opacity=".25"/><rect x="1287" y="115" width="1" height="1" fill="#4ec9b0" opacity=".55"/><rect x="1289" y="114" width="1" height="1" fill="#569cd6" opacity=".25"/><rect x="1289" y="115" width="1" height="1" fill="#569cd6" opacity=".55"/><rect x="1290" y="114" width="1" height="1" fill="#569cd6" opacity=".25"/><rect x="1290" y="115" width="1" height="1" fill="#569cd6" opacity=".55"/><rect x="1291" y="114" width="1" height="2" fill="#569cd6" opacity=".5"/><rect x="1292" y="114" width="1" height="1" fill="#569cd6" opacity=".25"/><rect x="1292" y="115" width="1" height="1" fill="#569cd6" opacity=".55"/><rect x="1293" y="114" width="1" height="1" fill="#569cd6" opacity=".25"/><rect x="1293" y="115" width="1" height="1" fill="#569cd6" opacity=".55"/><rect x="1294" y="114" width="1" height="2" fill="#569cd6" opacity=".5"/><rect x="1295" y="114" width="1" height="1" fill="#569cd6" opacity=".25"/><rect x="1295" y="115" width="1" height="1" fill="#569cd6" opacity=".55"/><rect x="1297" y="114" width="1" height="2" fill="#4ec9b0" opacity=".5"/><rect x="1298" y="114" width="1" height="1" fill="#4ec9b0" opacity=".25"/><rect x="1298" y="115" width="1" height="1" fill="#4ec9b0" opacity=".55"/><rect x="1299" y="114" width="1" height="1" fill="#4ec9b0" opacity=".25"/><rect x="1299" y="115" width="1" height="1" fill="#4ec9b0" opacity=".55"/><rect x="1300" y="114" width="1" height="2" fill="#4ec9b0" opacity=".5"/><rect x="1301" y="114" width="1" height="1" fill="#4ec9b0" opacity=".25"/><rect x="1301" y="115" width="1" height="1" fill="#4ec9b0" opacity=".55"/><rect x="1302" y="114" width="1" height="1" fill="#4ec9b0" opacity=".25"/><rect x="1302" y="115" width="1" height="1" fill="#4ec9b0" opacity=".55"/><rect x="1303" y="114" width="1" height="2" fill="#4ec9b0" opacity=".5"/><rect x="1304" y="114" width="1" height="2" fill="#4ec9b0" opacity=".5"/><rect x="1305" y="114" width="1" height="1" fill="#4ec9b0" opacity=".25"/><rect x="1305" y="115" width="1" height="1" fill="#4ec9b0" opacity=".55"/><rect x="1306" y="114" width="1" height="1" fill="#4ec9b0" opacity=".25"/><rect x="1306" y="115" width="1" height="1" fill="#4ec9b0" opacity=".55"/><rect x="1252" y="116" width="1" height="2" fill="#ffd700" opacity=".5"/><rect x="1256" y="118" width="1" height="2" fill="#6a9955" opacity=".5"/><rect x="1257" y="119" width="1" height="1" fill="#6a9955" opacity=".35"/><rect x="1258" y="119" width="1" height="1" fill="#6a9955" opacity=".35"/><rect x="1257" y="121" width="1" height="1" fill="#6a9955" opacity=".35"/><rect x="1259" y="120" width="1" height="2" fill="#6a9955" opacity=".5"/><rect x="1260" y="120" width="1" height="1" fill="#6a9955" opacity=".25"/><rect x="1260" y="121" width="1" height="1" fill="#6a9955" opacity=".55"/><rect x="1261" y="120" width="1" height="1" fill="#6a9955" opacity=".25"/><rect x="1261" y="121" width="1" height="1" fill="#6a9955" opacity=".55"/><rect x="1262" y="120" width="1" height="1" fill="#6a9955" opacity=".25"/><rect x="1262" y="121" width="1" height="1" fill="#6a9955" opacity=".55"/><rect x="1263" y="120" width="1" height="2" fill="#6a9955" opacity=".5"/><rect x="1264" y="120" width="1" height="1" fill="#6a9955" opacity=".25"/><rect x="1264" y="121" width="1" height="1" fill="#6a9955" opacity=".55"/><rect x="1265" y="120" width="1" height="1" fill="#6a9955" opacity=".25"/><rect x="1265" y="121" width="1" height="1" fill="#6a9955" opacity=".55"/><rect x="1267" y="120" width="1" height="2" fill="#6a9955" opacity=".5"/><rect x="1268" y="120" width="1" height="2" fill="#6a9955" opacity=".5"/><rect x="1269" y="120" width="1" height="1" fill="#6a9955" opacity=".25"/><rect x="1269" y="121" width="1" height="1" fill="#6a9955" opacity=".55"/><rect x="1271" y="120" width="1" height="2" fill="#6a9955" opacity=".5"/><rect x="1272" y="120" width="1" height="1" fill="#6a9955" opacity=".25"/><rect x="1272" y="121" width="1" height="1" fill="#6a9955" opacity=".55"/><rect x="1273" y="120" width="1" height="1" fill="#6a9955" opacity=".25"/><rect x="1273" y="121" width="1" height="1" fill="#6a9955" opacity=".55"/><rect x="1274" y="120" width="1" height="1" fill="#6a9955" opacity=".25"/><rect x="1274" y="121" width="1" height="1" fill="#6a9955" opacity=".55"/><rect x="1275" y="120" width="1" height="1" fill="#6a9955" opacity=".25"/><rect x="1275" y="121" width="1" height="1" fill="#6a9955" opacity=".55"/><rect x="1277" y="120" width="1" height="1" fill="#6a9955" opacity=".25"/><rect x="1277" y="121" width="1" height="1" fill="#6a9955" opacity=".55"/><rect x="1278" y="120" width="1" height="1" fill="#6a9955" opacity=".25"/><rect x="1278" y="121" width="1" height="1" fill="#6a9955" opacity=".55"/><rect x="1279" y="120" width="1" height="1" fill="#6a9955" opacity=".25"/><rect x="1279" y="121" width="1" height="1" fill="#6a9955" opacity=".55"/><rect x="1280" y="120" width="1" height="1" fill="#6a9955" opacity=".25"/><rect x="1280" y="121" width="1" height="1" fill="#6a9955" opacity=".55"/><rect x="1281" y="121" width="1" height="1" fill="#6a9955" opacity=".35"/><rect x="1257" y="123" width="1" height="1" fill="#6a9955" opacity=".35"/><rect x="1258" y="122" width="1" height="2" fill="#6a9955" opacity=".5"/><rect x="1256" y="124" width="1" height="1" fill="#569cd6" opacity=".25"/><rect x="1256" y="125" width="1" height="1" fill="#569cd6" opacity=".55"/><rect x="1257" y="124" width="1" height="1" fill="#569cd6" opacity=".25"/><rect x="1257" y="125" width="1" height="1" fill="#569cd6" opacity=".55"/><rect x="1258" y="124" width="1" height="2" fill="#569cd6" opacity=".5"/><rect x="1259" y="124" width="1" height="2" fill="#569cd6" opacity=".5"/><rect x="1260" y="124" width="1" height="1" fill="#569cd6" opacity=".25"/><rect x="1260" y="125" width="1" height="1" fill="#569cd6" opacity=".55"/><rect x="1261" y="124" width="1" height="1" fill="#569cd6" opacity=".25"/><rect x="1261" y="125" width="1" height="1" fill="#569cd6" opacity=".55"/><rect x="1263" y="124" width="1" height="2" fill="#569cd6" opacity=".5"/><rect x="1264" y="124" width="1" height="1" fill="#569cd6" opacity=".25"/><rect x="1264" y="125" width="1" height="1" fill="#569cd6" opacity=".55"/><rect x="1265" y="124" width="1" height="1" fill="#569cd6" opacity=".25"/><rect x="1265" y="125" width="1" height="1" fill="#569cd6" opacity=".55"/><rect x="1266" y="124" width="1" height="1" fill="#569cd6" opacity=".25"/><rect x="1266" y="125" width="1" height="1" fill="#569cd6" opacity=".55"/><rect x="1267" y="124" width="1" height="2" fill="#569cd6" opacity=".5"/><rect x="1268" y="124" width="1" height="1" fill="#569cd6" opacity=".25"/><rect x="1268" y="125" width="1" height="1" fill="#569cd6" opacity=".55"/><rect x="1269" y="124" width="1" height="1" fill="#569cd6" opacity=".25"/><rect x="1269" y="125" width="1" height="1" fill="#569cd6" opacity=".55"/><rect x="1270" y="124" width="1" height="1" fill="#569cd6" opacity=".25"/><rect x="1270" y="125" width="1" height="1" fill="#569cd6" opacity=".55"/><rect x="1272" y="124" width="1" height="1" fill="#dcdcaa" opacity=".25"/><rect x="1272" y="125" width="1" height="1" fill="#dcdcaa" opacity=".55"/><rect x="1273" y="124" width="1" height="1" fill="#dcdcaa" opacity=".25"/><rect x="1273" y="125" width="1" height="1" fill="#dcdcaa" opacity=".55"/><rect x="1274" y="124" width="1" height="1" fill="#dcdcaa" opacity=".25"/><rect x="1274" y="125" width="1" height="1" fill="#dcdcaa" opacity=".55"/><rect x="1275" y="124" width="1" height="1" fill="#dcdcaa" opacity=".25"/><rect x="1275" y="125" width="1" height="1" fill="#dcdcaa" opacity=".55"/><rect x="1276" y="124" width="1" height="2" fill="#dcdcaa" opacity=".5"/><rect x="1277" y="124" width="1" height="1" fill="#dcdcaa" opacity=".25"/><rect x="1277" y="125" width="1" height="1" fill="#dcdcaa" opacity=".55"/><rect x="1278" y="124" width="1" height="2" fill="#da70d6" opacity=".5"/><rect x="1279" y="124" width="1" height="2" fill="#da70d6" opacity=".5"/><rect x="1280" y="125" width="1" height="1" fill="#cccccc" opacity=".35"/><rect x="1282" y="124" width="1" height="2" fill="#4ec9b0" opacity=".5"/><rect x="1283" y="124" width="1" height="1" fill="#4ec9b0" opacity=".25"/><rect x="1283" y="125" width="1" height="1" fill="#4ec9b0" opacity=".55"/><rect x="1284" y="124" width="1" height="1" fill="#4ec9b0" opacity=".25"/><rect x="1284" y="125" width="1" height="1" fill="#4ec9b0" opacity=".55"/><rect x="1285" y="124" width="1" height="1" fill="#4ec9b0" opacity=".25"/><rect x="1285" y="125" width="1" height="1" fill="#4ec9b0" opacity=".55"/><rect x="1256" y="126" width="1" height="2" fill="#da70d6" opacity=".5"/><rect x="1260" y="128" width="1" height="1" fill="#c586c0" opacity=".25"/><rect x="1260" y="129" width="1" height="1" fill="#c586c0" opacity=".55"/><rect x="1261" y="128" width="1" height="1" fill="#c586c0" opacity=".25"/><rect x="1261" y="129" width="1" height="1" fill="#c586c0" opacity=".55"/><rect x="1262" y="128" width="1" height="2" fill="#c586c0" opacity=".5"/><rect x="1263" y="128" width="1" height="1" fill="#c586c0" opacity=".25"/><rect x="1263" y="129" width="1" height="1" fill="#c586c0" opacity=".55"/><rect x="1264" y="128" width="1" height="1" fill="#c586c0" opacity=".25"/><rect x="1264" y="129" width="1" height="1" fill="#c586c0" opacity=".55"/><rect x="1265" y="128" width="1" height="1" fill="#c586c0" opacity=".25"/><rect x="1265" y="129" width="1" height="1" fill="#c586c0" opacity=".55"/><rect x="1267" y="128" width="1" height="1" fill="#dcdcaa" opacity=".25"/><rect x="1267" y="129" width="1" height="1" fill="#dcdcaa" opacity=".55"/><rect x="1268" y="128" width="1" height="1" fill="#dcdcaa" opacity=".25"/><rect x="1268" y="129" width="1" height="1" fill="#dcdcaa" opacity=".55"/><rect x="1269" y="128" width="1" height="1" fill="#dcdcaa" opacity=".25"/><rect x="1269" y="129" width="1" height="1" fill="#dcdcaa" opacity=".55"/><rect x="1270" y="128" width="1" height="1" fill="#dcdcaa" opacity=".25"/><rect x="1270" y="129" width="1" height="1" fill="#dcdcaa" opacity=".55"/><rect x="1271" y="128" width="1" height="2" fill="#179fff" opacity=".5"/><rect x="1272" y="128" width="1" height="2" fill="#ce9178" opacity=".5"/><rect x="1273" y="128" width="1" height="1" fill="#ce9178" opacity=".25"/><rect x="1273" y="129" width="1" height="1" fill="#ce9178" opacity=".55"/><rect x="1274" y="128" width="1" height="1" fill="#ce9178" opacity=".25"/><rect x="1274" y="129" width="1" height="1" fill="#ce9178" opacity=".55"/><rect x="1275" y="128" width="1" height="2" fill="#ce9178" opacity=".5"/><rect x="1276" y="128" width="1" height="2" fill="#ce9178" opacity=".5"/><rect x="1277" y="129" width="1" height="1" fill="#ce9178" opacity=".35"/><rect x="1278" y="128" width="1" height="2" fill="#ce9178" opacity=".5"/><rect x="1279" y="128" width="1" height="1" fill="#ce9178" opacity=".25"/><rect x="1279" y="129" width="1" height="1" fill="#ce9178" opacity=".55"/><rect x="1280" y="128" width="1" height="1" fill="#ce9178" opacity=".25"/><rect x="1280" y="129" width="1" height="1" fill="#ce9178" opacity=".55"/><rect x="1281" y="128" width="1" height="1" fill="#ce9178" opacity=".25"/><rect x="1281" y="129" width="1" height="1" fill="#ce9178" opacity=".55"/><rect x="1282" y="128" width="1" height="1" fill="#ce9178" opacity=".25"/><rect x="1282" y="129" width="1" height="1" fill="#ce9178" opacity=".55"/><rect x="1283" y="128" width="1" height="2" fill="#ce9178" opacity=".5"/><rect x="1284" y="128" width="1" height="2" fill="#179fff" opacity=".5"/><rect x="1285" y="129" width="1" height="1" fill="#cccccc" opacity=".35"/><rect x="1256" y="130" width="1" height="2" fill="#da70d6" opacity=".5"/><rect x="1256" y="134" width="1" height="2" fill="#6a9955" opacity=".5"/><rect x="1257" y="135" width="1" height="1" fill="#6a9955" opacity=".35"/><rect x="1258" y="135" width="1" height="1" fill="#6a9955" opacity=".35"/><rect x="1257" y="137" width="1" height="1" fill="#6a9955" opacity=".35"/><rect x="1259" y="136" width="1" height="2" fill="#6a9955" opacity=".5"/><rect x="1260" y="136" width="1" height="1" fill="#6a9955" opacity=".25"/><rect x="1260" y="137" width="1" height="1" fill="#6a9955" opacity=".55"/><rect x="1261" y="136" width="1" height="1" fill="#6a9955" opacity=".25"/><rect x="1261" y="137" width="1" height="1" fill="#6a9955" opacity=".55"/><rect x="1262" y="136" width="1" height="2" fill="#6a9955" opacity=".5"/><rect x="1263" y="136" width="1" height="2" fill="#6a9955" opacity=".5"/><rect x="1264" y="136" width="1" height="1" fill="#6a9955" opacity=".25"/><rect x="1264" y="137" width="1" height="1" fill="#6a9955" opacity=".55"/><rect x="1266" y="136" width="1" height="1" fill="#6a9955" opacity=".25"/><rect x="1266" y="137" width="1" height="1" fill="#6a9955" opacity=".55"/><rect x="1267" y="136" width="1" height="1" fill="#6a9955" opacity=".25"/><rect x="1267" y="137" width="1" height="1" fill="#6a9955" opacity=".55"/><rect x="1269" y="136" width="1" height="1" fill="#6a9955" opacity=".25"/><rect x="1269" y="137" width="1" height="1" fill="#6a9955" opacity=".55"/><rect x="1270" y="136" width="1" height="1" fill="#6a9955" opacity=".25"/><rect x="1270" y="137" width="1" height="1" fill="#6a9955" opacity=".55"/><rect x="1271" y="136" width="1" height="1" fill="#6a9955" opacity=".25"/><rect x="1271" y="137" width="1" height="1" fill="#6a9955" opacity=".55"/><rect x="1272" y="136" width="1" height="1" fill="#6a9955" opacity=".25"/><rect x="1272" y="137" width="1" height="1" fill="#6a9955" opacity=".55"/><rect x="1273" y="136" width="1" height="1" fill="#6a9955" opacity=".25"/><rect x="1273" y="137" width="1" height="1" fill="#6a9955" opacity=".55"/><rect x="1274" y="136" width="1" height="1" fill="#6a9955" opacity=".25"/><rect x="1274" y="137" width="1" height="1" fill="#6a9955" opacity=".55"/><rect x="1275" y="136" width="1" height="1" fill="#6a9955" opacity=".25"/><rect x="1275" y="137" width="1" height="1" fill="#6a9955" opacity=".55"/><rect x="1276" y="136" width="1" height="1" fill="#6a9955" opacity=".25"/><rect x="1276" y="137" width="1" height="1" fill="#6a9955" opacity=".55"/><rect x="1278" y="136" width="1" height="1" fill="#6a9955" opacity=".25"/><rect x="1278" y="137" width="1" height="1" fill="#6a9955" opacity=".55"/><rect x="1279" y="136" width="1" height="1" fill="#6a9955" opacity=".25"/><rect x="1279" y="137" width="1" height="1" fill="#6a9955" opacity=".55"/><rect x="1280" y="136" width="1" height="2" fill="#6a9955" opacity=".5"/><rect x="1281" y="136" width="1" height="2" fill="#6a9955" opacity=".5"/><rect x="1282" y="136" width="1" height="1" fill="#6a9955" opacity=".25"/><rect x="1282" y="137" width="1" height="1" fill="#6a9955" opacity=".55"/><rect x="1283" y="136" width="1" height="1" fill="#6a9955" opacity=".25"/><rect x="1283" y="137" width="1" height="1" fill="#6a9955" opacity=".55"/><rect x="1284" y="136" width="1" height="2" fill="#6a9955" opacity=".5"/><rect x="1285" y="136" width="1" height="1" fill="#6a9955" opacity=".25"/><rect x="1285" y="137" width="1" height="1" fill="#6a9955" opacity=".55"/><rect x="1286" y="136" width="1" height="1" fill="#6a9955" opacity=".25"/><rect x="1286" y="137" width="1" height="1" fill="#6a9955" opacity=".55"/><rect x="1287" y="136" width="1" height="1" fill="#6a9955" opacity=".25"/><rect x="1287" y="137" width="1" height="1" fill="#6a9955" opacity=".55"/><rect x="1288" y="136" width="1" height="2" fill="#6a9955" opacity=".5"/><rect x="1289" y="136" width="1" height="1" fill="#6a9955" opacity=".25"/><rect x="1289" y="137" width="1" height="1" fill="#6a9955" opacity=".55"/><rect x="1290" y="136" width="1" height="1" fill="#6a9955" opacity=".25"/><rect x="1290" y="137" width="1" height="1" fill="#6a9955" opacity=".55"/><rect x="1291" y="136" width="1" height="1" fill="#6a9955" opacity=".25"/><rect x="1291" y="137" width="1" height="1" fill="#6a9955" opacity=".55"/><rect x="1293" y="136" width="1" height="1" fill="#6a9955" opacity=".25"/><rect x="1293" y="137" width="1" height="1" fill="#6a9955" opacity=".55"/><rect x="1294" y="136" width="1" height="1" fill="#6a9955" opacity=".25"/><rect x="1294" y="137" width="1" height="1" fill="#6a9955" opacity=".55"/><rect x="1295" y="136" width="1" height="1" fill="#6a9955" opacity=".25"/><rect x="1295" y="137" width="1" height="1" fill="#6a9955" opacity=".55"/><rect x="1296" y="136" width="1" height="1" fill="#6a9955" opacity=".25"/><rect x="1296" y="137" width="1" height="1" fill="#6a9955" opacity=".55"/><rect x="1297" y="136" width="1" height="1" fill="#6a9955" opacity=".25"/><rect x="1297" y="137" width="1" height="1" fill="#6a9955" opacity=".55"/><rect x="1298" y="136" width="1" height="1" fill="#6a9955" opacity=".25"/><rect x="1298" y="137" width="1" height="1" fill="#6a9955" opacity=".55"/><rect x="1299" y="136" width="1" height="2" fill="#6a9955" opacity=".5"/><rect x="1300" y="137" width="1" height="1" fill="#6a9955" opacity=".35"/><rect x="1257" y="139" width="1" height="1" fill="#6a9955" opacity=".35"/><rect x="1258" y="138" width="1" height="2" fill="#6a9955" opacity=".5"/><rect x="1256" y="140" width="1" height="1" fill="#569cd6" opacity=".25"/><rect x="1256" y="141" width="1" height="1" fill="#569cd6" opacity=".55"/><rect x="1257" y="140" width="1" height="1" fill="#569cd6" opacity=".25"/><rect x="1257" y="141" width="1" height="1" fill="#569cd6" opacity=".55"/><rect x="1258" y="140" width="1" height="2" fill="#569cd6" opacity=".5"/><rect x="1259" y="140" width="1" height="2" fill="#569cd6" opacity=".5"/><rect x="1260" y="140" width="1" height="1" fill="#569cd6" opacity=".25"/><rect x="1260" y="141" width="1" height="1" fill="#569cd6" opacity=".55"/><rect x="1261" y="140" width="1" height="1" fill="#569cd6" opacity=".25"/><rect x="1261" y="141" width="1" height="1" fill="#569cd6" opacity=".55"/><rect x="1263" y="140" width="1" height="2" fill="#569cd6" opacity=".5"/><rect x="1264" y="140" width="1" height="1" fill="#569cd6" opacity=".25"/><rect x="1264" y="141" width="1" height="1" fill="#569cd6" opacity=".55"/><rect x="1265" y="140" width="1" height="1" fill="#569cd6" opacity=".25"/><rect x="1265" y="141" width="1" height="1" fill="#569cd6" opacity=".55"/><rect x="1266" y="140" width="1" height="1" fill="#569cd6" opacity=".25"/><rect x="1266" y="141" width="1" height="1" fill="#569cd6" opacity=".55"/><rect x="1267" y="140" width="1" height="2" fill="#569cd6" opacity=".5"/><rect x="1268" y="140" width="1" height="1" fill="#569cd6" opacity=".25"/><rect x="1268" y="141" width="1" height="1" fill="#569cd6" opacity=".55"/><rect x="1269" y="140" width="1" height="1" fill="#569cd6" opacity=".25"/><rect x="1269" y="141" width="1" height="1" fill="#569cd6" opacity=".55"/><rect x="1270" y="140" width="1" height="1" fill="#569cd6" opacity=".25"/><rect x="1270" y="141" width="1" height="1" fill="#569cd6" opacity=".55"/><rect x="1272" y="140" width="1" height="1" fill="#dcdcaa" opacity=".25"/><rect x="1272" y="141" width="1" height="1" fill="#dcdcaa" opacity=".55"/><rect x="1273" y="140" width="1" height="2" fill="#dcdcaa" opacity=".5"/><rect x="1274" y="140" width="1" height="1" fill="#dcdcaa" opacity=".25"/><rect x="1274" y="141" width="1" height="1" fill="#dcdcaa" opacity=".55"/><rect x="1275" y="140" width="1" height="1" fill="#dcdcaa" opacity=".25"/><rect x="1275" y="141" width="1" height="1" fill="#dcdcaa" opacity=".55"/><rect x="1276" y="140" width="1" height="1" fill="#dcdcaa" opacity=".25"/><rect x="1276" y="141" width="1" height="1" fill="#dcdcaa" opacity=".55"/><rect x="1277" y="140" width="1" height="2" fill="#da70d6" opacity=".5"/><rect x="1278" y="140" width="1" height="2" fill="#4ec9b0" opacity=".5"/><rect x="1279" y="140" width="1" height="1" fill="#4ec9b0" opacity=".25"/><rect x="1279" y="141" width="1" height="1" fill="#4ec9b0" opacity=".55"/><rect x="1280" y="140" width="1" height="1" fill="#4ec9b0" opacity=".25"/><rect x="1280" y="141" width="1" height="1" fill="#4ec9b0" opacity=".55"/><rect x="1281" y="140" width="1" height="1" fill="#4ec9b0" opacity=".25"/><rect x="1281" y="141" width="1" height="1" fill="#4ec9b0" opacity=".55"/><rect x="1282" y="140" width="1" height="1" fill="#4ec9b0" opacity=".25"/><rect x="1282" y="141" width="1" height="1" fill="#4ec9b0" opacity=".55"/><rect x="1283" y="140" width="1" height="2" fill="#4ec9b0" opacity=".5"/><rect x="1284" y="140" width="1" height="1" fill="#4ec9b0" opacity=".25"/><rect x="1284" y="141" width="1" height="1" fill="#4ec9b0" opacity=".55"/><rect x="1285" y="140" width="1" height="1" fill="#4ec9b0" opacity=".25"/><rect x="1285" y="141" width="1" height="1" fill="#4ec9b0" opacity=".55"/><rect x="1286" y="140" width="1" height="1" fill="#4ec9b0" opacity=".25"/><rect x="1286" y="141" width="1" height="1" fill="#4ec9b0" opacity=".55"/><rect x="1287" y="140" width="1" height="1" fill="#4ec9b0" opacity=".25"/><rect x="1287" y="141" width="1" height="1" fill="#4ec9b0" opacity=".55"/><rect x="1288" y="140" width="1" height="1" fill="#4ec9b0" opacity=".25"/><rect x="1288" y="141" width="1" height="1" fill="#4ec9b0" opacity=".55"/><rect x="1289" y="140" width="1" height="2" fill="#4ec9b0" opacity=".5"/><rect x="1291" y="140" width="1" height="2" fill="#9cdcfe" opacity=".5"/><rect x="1292" y="140" width="1" height="1" fill="#9cdcfe" opacity=".25"/><rect x="1292" y="141" width="1" height="1" fill="#9cdcfe" opacity=".55"/><rect x="1293" y="140" width="1" height="1" fill="#9cdcfe" opacity=".25"/><rect x="1293" y="141" width="1" height="1" fill="#9cdcfe" opacity=".55"/><rect x="1294" y="140" width="1" height="1" fill="#9cdcfe" opacity=".25"/><rect x="1294" y="141" width="1" height="1" fill="#9cdcfe" opacity=".55"/><rect x="1295" y="140" width="1" height="1" fill="#9cdcfe" opacity=".25"/><rect x="1295" y="141" width="1" height="1" fill="#9cdcfe" opacity=".55"/><rect x="1296" y="140" width="1" height="1" fill="#9cdcfe" opacity=".25"/><rect x="1296" y="141" width="1" height="1" fill="#9cdcfe" opacity=".55"/><rect x="1297" y="140" width="1" height="1" fill="#9cdcfe" opacity=".25"/><rect x="1297" y="141" width="1" height="1" fill="#9cdcfe" opacity=".55"/><rect x="1298" y="140" width="1" height="2" fill="#9cdcfe" opacity=".5"/><rect x="1299" y="140" width="1" height="2" fill="#da70d6" opacity=".5"/><rect x="1300" y="141" width="1" height="1" fill="#cccccc" opacity=".35"/><rect x="1302" y="140" width="1" height="2" fill="#4ec9b0" opacity=".5"/><rect x="1303" y="140" width="1" height="1" fill="#4ec9b0" opacity=".25"/><rect x="1303" y="141" width="1" height="1" fill="#4ec9b0" opacity=".55"/><rect x="1304" y="140" width="1" height="2" fill="#4ec9b0" opacity=".5"/><rect x="1305" y="140" width="1" height="1" fill="#4ec9b0" opacity=".25"/><rect x="1305" y="141" width="1" height="1" fill="#4ec9b0" opacity=".55"/><rect x="1306" y="140" width="1" height="1" fill="#4ec9b0" opacity=".25"/><rect x="1306" y="141" width="1" height="1" fill="#4ec9b0" opacity=".55"/><rect x="1307" y="140" width="1" height="1" fill="#4ec9b0" opacity=".25"/><rect x="1307" y="141" width="1" height="1" fill="#4ec9b0" opacity=".55"/><rect x="1308" y="140" width="1" height="1" fill="#4ec9b0" opacity=".25"/><rect x="1308" y="141" width="1" height="1" fill="#4ec9b0" opacity=".55"/><rect x="1309" y="140" width="1" height="2" fill="#4ec9b0" opacity=".5"/><rect x="1310" y="140" width="1" height="2" fill="#4ec9b0" opacity=".5"/><rect x="1311" y="140" width="1" height="1" fill="#4ec9b0" opacity=".25"/><rect x="1311" y="141" width="1" height="1" fill="#4ec9b0" opacity=".55"/><rect x="1312" y="140" width="1" height="1" fill="#4ec9b0" opacity=".25"/><rect x="1312" y="141" width="1" height="1" fill="#4ec9b0" opacity=".55"/><rect x="1313" y="140" width="1" height="1" fill="#4ec9b0" opacity=".25"/><rect x="1313" y="141" width="1" height="1" fill="#4ec9b0" opacity=".55"/><rect x="1314" y="140" width="1" height="1" fill="#4ec9b0" opacity=".25"/><rect x="1314" y="141" width="1" height="1" fill="#4ec9b0" opacity=".55"/><rect x="1315" y="140" width="1" height="1" fill="#4ec9b0" opacity=".25"/><rect x="1315" y="141" width="1" height="1" fill="#4ec9b0" opacity=".55"/><rect x="1316" y="140" width="1" height="1" fill="#4ec9b0" opacity=".25"/><rect x="1316" y="141" width="1" height="1" fill="#4ec9b0" opacity=".55"/><rect x="1317" y="140" width="1" height="1" fill="#4ec9b0" opacity=".25"/><rect x="1317" y="141" width="1" height="1" fill="#4ec9b0" opacity=".55"/><rect x="1256" y="142" width="1" height="2" fill="#da70d6" opacity=".5"/><rect x="1260" y="144" width="1" height="2" fill="#9cdcfe" opacity=".5"/><rect x="1261" y="144" width="1" height="1" fill="#9cdcfe" opacity=".25"/><rect x="1261" y="145" width="1" height="1" fill="#9cdcfe" opacity=".55"/><rect x="1262" y="144" width="1" height="1" fill="#9cdcfe" opacity=".25"/><rect x="1262" y="145" width="1" height="1" fill="#9cdcfe" opacity=".55"/><rect x="1263" y="144" width="1" height="1" fill="#9cdcfe" opacity=".25"/><rect x="1263" y="145" width="1" height="1" fill="#9cdcfe" opacity=".55"/><rect x="1264" y="144" width="1" height="1" fill="#9cdcfe" opacity=".25"/><rect x="1264" y="145" width="1" height="1" fill="#9cdcfe" opacity=".55"/><rect x="1265" y="144" width="1" height="1" fill="#9cdcfe" opacity=".25"/><rect x="1265" y="145" width="1" height="1" fill="#9cdcfe" opacity=".55"/><rect x="1266" y="144" width="1" height="1" fill="#9cdcfe" opacity=".25"/><rect x="1266" y="145" width="1" height="1" fill="#9cdcfe" opacity=".55"/><rect x="1267" y="144" width="1" height="2" fill="#9cdcfe" opacity=".5"/><rect x="1268" y="145" width="1" height="1" fill="#cccccc" opacity=".35"/><rect x="1269" y="144" width="1" height="2" fill="#cccccc" opacity=".5"/><rect x="1270" y="144" width="1" height="1" fill="#dcdcaa" opacity=".25"/><rect x="1270" y="145" width="1" height="1" fill="#dcdcaa" opacity=".55"/><rect x="1271" y="144" width="1" height="1" fill="#dcdcaa" opacity=".25"/><rect x="1271" y="145" width="1" height="1" fill="#dcdcaa" opacity=".55"/><rect x="1272" y="144" width="1" height="2" fill="#dcdcaa" opacity=".5"/><rect x="1273" y="144" width="1" height="2" fill="#dcdcaa" opacity=".5"/><rect x="1274" y="144" width="1" height="1" fill="#dcdcaa" opacity=".25"/><rect x="1274" y="145" width="1" height="1" fill="#dcdcaa" opacity=".55"/><rect x="1275" y="144" width="1" height="1" fill="#dcdcaa" opacity=".25"/><rect x="1275" y="145" width="1" height="1" fill="#dcdcaa" opacity=".55"/><rect x="1276" y="144" width="1" height="2" fill="#dcdcaa" opacity=".5"/><rect x="1277" y="144" width="1" height="1" fill="#dcdcaa" opacity=".25"/><rect x="1277" y="145" width="1" height="1" fill="#dcdcaa" opacity=".55"/><rect x="1278" y="144" width="1" height="1" fill="#dcdcaa" opacity=".25"/><rect x="1278" y="145" width="1" height="1" fill="#dcdcaa" opacity=".55"/><rect x="1279" y="144" width="1" height="1" fill="#dcdcaa" opacity=".25"/><rect x="1279" y="145" width="1" height="1" fill="#dcdcaa" opacity=".55"/><rect x="1280" y="144" width="1" height="2" fill="#dcdcaa" opacity=".5"/><rect x="1281" y="144" width="1" height="1" fill="#dcdcaa" opacity=".25"/><rect x="1281" y="145" width="1" height="1" fill="#dcdcaa" opacity=".55"/><rect x="1282" y="144" width="1" height="2" fill="#179fff" opacity=".5"/><rect x="1283" y="144" width="1" height="2" fill="#179fff" opacity=".5"/><rect x="1284" y="145" width="1" height="1" fill="#cccccc" opacity=".35"/><rect x="1260" y="148" width="1" height="2" fill="#9cdcfe" opacity=".5"/><rect x="1261" y="148" width="1" height="1" fill="#9cdcfe" opacity=".25"/><rect x="1261" y="149" width="1" height="1" fill="#9cdcfe" opacity=".55"/><rect x="1262" y="148" width="1" height="1" fill="#9cdcfe" opacity=".25"/><rect x="1262" y="149" width="1" height="1" fill="#9cdcfe" opacity=".55"/><rect x="1263" y="148" width="1" height="1" fill="#9cdcfe" opacity=".25"/><rect x="1263" y="149" width="1" height="1" fill="#9cdcfe" opacity=".55"/><rect x="1264" y="148" width="1" height="1" fill="#9cdcfe" opacity=".25"/><rect x="1264" y="149" width="1" height="1" fill="#9cdcfe" opacity=".55"/><rect x="1265" y="148" width="1" height="1" fill="#9cdcfe" opacity=".25"/><rect x="1265" y="149" width="1" height="1" fill="#9cdcfe" opacity=".55"/><rect x="1266" y="148" width="1" height="1" fill="#9cdcfe" opacity=".25"/><rect x="1266" y="149" width="1" height="1" fill="#9cdcfe" opacity=".55"/><rect x="1267" y="148" width="1" height="2" fill="#9cdcfe" opacity=".5"/><rect x="1268" y="149" width="1" height="1" fill="#cccccc" opacity=".35"/><rect x="1269" y="148" width="1" height="2" fill="#cccccc" opacity=".5"/><rect x="1270" y="148" width="1" height="1" fill="#dcdcaa" opacity=".25"/><rect x="1270" y="149" width="1" height="1" fill="#dcdcaa" opacity=".55"/><rect x="1271" y="148" width="1" height="1" fill="#dcdcaa" opacity=".25"/><rect x="1271" y="149" width="1" height="1" fill="#dcdcaa" opacity=".55"/><rect x="1272" y="148" width="1" height="1" fill="#dcdcaa" opacity=".25"/><rect x="1272" y="149" width="1" height="1" fill="#dcdcaa" opacity=".55"/><rect x="1273" y="148" width="1" height="1" fill="#dcdcaa" opacity=".25"/><rect x="1273" y="149" width="1" height="1" fill="#dcdcaa" opacity=".55"/><rect x="1274" y="148" width="1" height="1" fill="#dcdcaa" opacity=".25"/><rect x="1274" y="149" width="1" height="1" fill="#dcdcaa" opacity=".55"/><rect x="1275" y="148" width="1" height="1" fill="#dcdcaa" opacity=".25"/><rect x="1275" y="149" width="1" height="1" fill="#dcdcaa" opacity=".55"/><rect x="1276" y="148" width="1" height="1" fill="#dcdcaa" opacity=".25"/><rect x="1276" y="149" width="1" height="1" fill="#dcdcaa" opacity=".55"/><rect x="1277" y="148" width="1" height="2" fill="#179fff" opacity=".5"/><rect x="1278" y="148" width="1" height="2" fill="#179fff" opacity=".5"/><rect x="1279" y="149" width="1" height="1" fill="#cccccc" opacity=".35"/><rect x="1280" y="148" width="1" height="2" fill="#cccccc" opacity=".5"/><rect x="1281" y="148" width="1" height="1" fill="#dcdcaa" opacity=".25"/><rect x="1281" y="149" width="1" height="1" fill="#dcdcaa" opacity=".55"/><rect x="1282" y="148" width="1" height="1" fill="#dcdcaa" opacity=".25"/><rect x="1282" y="149" width="1" height="1" fill="#dcdcaa" opacity=".55"/><rect x="1283" y="148" width="1" height="1" fill="#dcdcaa" opacity=".25"/><rect x="1283" y="149" width="1" height="1" fill="#dcdcaa" opacity=".55"/><rect x="1284" y="148" width="1" height="1" fill="#dcdcaa" opacity=".25"/><rect x="1284" y="149" width="1" height="1" fill="#dcdcaa" opacity=".55"/><rect x="1285" y="148" width="1" height="1" fill="#dcdcaa" opacity=".25"/><rect x="1285" y="149" width="1" height="1" fill="#dcdcaa" opacity=".55"/><rect x="1286" y="148" width="1" height="1" fill="#dcdcaa" opacity=".25"/><rect x="1286" y="149" width="1" height="1" fill="#dcdcaa" opacity=".55"/><rect x="1287" y="148" width="1" height="1" fill="#dcdcaa" opacity=".25"/><rect x="1287" y="149" width="1" height="1" fill="#dcdcaa" opacity=".55"/><rect x="1288" y="148" width="1" height="1" fill="#dcdcaa" opacity=".25"/><rect x="1288" y="149" width="1" height="1" fill="#dcdcaa" opacity=".55"/><rect x="1289" y="148" width="1" height="2" fill="#dcdcaa" opacity=".5"/><rect x="1290" y="148" width="1" height="1" fill="#dcdcaa" opacity=".25"/><rect x="1290" y="149" width="1" height="1" fill="#dcdcaa" opacity=".55"/><rect x="1291" y="148" width="1" height="2" fill="#179fff" opacity=".5"/><rect x="1292" y="148" width="1" height="2" fill="#179fff" opacity=".5"/><rect x="1293" y="149" width="1" height="1" fill="#cccccc" opacity=".35"/><rect x="1260" y="152" width="1" height="1" fill="#c586c0" opacity=".25"/><rect x="1260" y="153" width="1" height="1" fill="#c586c0" opacity=".55"/><rect x="1261" y="152" width="1" height="1" fill="#c586c0" opacity=".25"/><rect x="1261" y="153" width="1" height="1" fill="#c586c0" opacity=".55"/><rect x="1262" y="152" width="1" height="2" fill="#c586c0" opacity=".5"/><rect x="1263" y="152" width="1" height="1" fill="#c586c0" opacity=".25"/><rect x="1263" y="153" width="1" height="1" fill="#c586c0" opacity=".55"/><rect x="1264" y="152" width="1" height="1" fill="#c586c0" opacity=".25"/><rect x="1264" y="153" width="1" height="1" fill="#c586c0" opacity=".55"/><rect x="1265" y="152" width="1" height="1" fill="#c586c0" opacity=".25"/><rect x="1265" y="153" width="1" height="1" fill="#c586c0" opacity=".55"/><rect x="1267" y="152" width="1" height="1" fill="#dcdcaa" opacity=".25"/><rect x="1267" y="153" width="1" height="1" fill="#dcdcaa" opacity=".55"/><rect x="1268" y="152" width="1" height="1" fill="#dcdcaa" opacity=".25"/><rect x="1268" y="153" width="1" height="1" fill="#dcdcaa" opacity=".55"/><rect x="1269" y="152" width="1" height="2" fill="#dcdcaa" opacity=".5"/><rect x="1270" y="152" width="1" height="1" fill="#dcdcaa" opacity=".25"/><rect x="1270" y="153" width="1" height="1" fill="#dcdcaa" opacity=".55"/><rect x="1271" y="152" width="1" height="1" fill="#dcdcaa" opacity=".25"/><rect x="1271" y="153" width="1" height="1" fill="#dcdcaa" opacity=".55"/><rect x="1272" y="152" width="1" height="1" fill="#dcdcaa" opacity=".25"/><rect x="1272" y="153" width="1" height="1" fill="#dcdcaa" opacity=".55"/><rect x="1273" y="152" width="1" height="1" fill="#dcdcaa" opacity=".25"/><rect x="1273" y="153" width="1" height="1" fill="#dcdcaa" opacity=".55"/><rect x="1274" y="152" width="1" height="2" fill="#dcdcaa" opacity=".5"/><rect x="1275" y="152" width="1" height="2" fill="#179fff" opacity=".5"/><rect x="1276" y="152" width="1" height="2" fill="#179fff" opacity=".5"/><rect x="1277" y="153" width="1" height="1" fill="#cccccc" opacity=".35"/><rect x="1278" y="152" width="1" height="2" fill="#cccccc" opacity=".5"/><rect x="1279" y="152" width="1" height="1" fill="#dcdcaa" opacity=".25"/><rect x="1279" y="153" width="1" height="1" fill="#dcdcaa" opacity=".55"/><rect x="1280" y="152" width="1" height="1" fill="#dcdcaa" opacity=".25"/><rect x="1280" y="153" width="1" height="1" fill="#dcdcaa" opacity=".55"/><rect x="1281" y="152" width="1" height="2" fill="#dcdcaa" opacity=".5"/><rect x="1282" y="152" width="1" height="1" fill="#dcdcaa" opacity=".25"/><rect x="1282" y="153" width="1" height="1" fill="#dcdcaa" opacity=".55"/><rect x="1283" y="152" width="1" height="1" fill="#dcdcaa" opacity=".25"/><rect x="1283" y="153" width="1" height="1" fill="#dcdcaa" opacity=".55"/><rect x="1284" y="152" width="1" height="2" fill="#dcdcaa" opacity=".5"/><rect x="1285" y="152" width="1" height="1" fill="#dcdcaa" opacity=".25"/><rect x="1285" y="153" width="1" height="1" fill="#dcdcaa" opacity=".55"/><rect x="1286" y="152" width="1" height="2" fill="#dcdcaa" opacity=".5"/><rect x="1287" y="152" width="1" height="2" fill="#179fff" opacity=".5"/><rect x="1288" y="152" width="1" height="1" fill="#dcdcaa" opacity=".25"/><rect x="1288" y="153" width="1" height="1" fill="#dcdcaa" opacity=".55"/><rect x="1289" y="152" width="1" height="1" fill="#dcdcaa" opacity=".25"/><rect x="1289" y="153" width="1" height="1" fill="#dcdcaa" opacity=".55"/><rect x="1290" y="152" width="1" height="1" fill="#dcdcaa" opacity=".25"/><rect x="1290" y="153" width="1" height="1" fill="#dcdcaa" opacity=".55"/><rect x="1291" y="152" width="1" height="2" fill="#dcdcaa" opacity=".5"/><rect x="1292" y="152" width="1" height="1" fill="#dcdcaa" opacity=".25"/><rect x="1292" y="153" width="1" height="1" fill="#dcdcaa" opacity=".55"/><rect x="1293" y="152" width="1" height="2" fill="#ffd700" opacity=".5"/><rect x="1294" y="152" width="1" height="2" fill="#ce9178" opacity=".5"/><rect x="1295" y="152" width="1" height="2" fill="#ce9178" opacity=".5"/><rect x="1296" y="152" width="1" height="1" fill="#ce9178" opacity=".25"/><rect x="1296" y="153" width="1" height="1" fill="#ce9178" opacity=".55"/><rect x="1297" y="152" width="1" height="1" fill="#ce9178" opacity=".25"/><rect x="1297" y="153" width="1" height="1" fill="#ce9178" opacity=".55"/><rect x="1298" y="152" width="1" height="2" fill="#ce9178" opacity=".5"/><rect x="1299" y="152" width="1" height="2" fill="#ce9178" opacity=".5"/><rect x="1300" y="152" width="1" height="1" fill="#ce9178" opacity=".25"/><rect x="1300" y="153" width="1" height="1" fill="#ce9178" opacity=".55"/><rect x="1301" y="152" width="1" height="1" fill="#ce9178" opacity=".25"/><rect x="1301" y="153" width="1" height="1" fill="#ce9178" opacity=".55"/><rect x="1302" y="152" width="1" height="1" fill="#ce9178" opacity=".25"/><rect x="1302" y="153" width="1" height="1" fill="#ce9178" opacity=".55"/><rect x="1303" y="152" width="1" height="2" fill="#ce9178" opacity=".5"/><rect x="1304" y="152" width="1" height="2" fill="#ce9178" opacity=".5"/><rect x="1305" y="153" width="1" height="1" fill="#cccccc" opacity=".35"/><rect x="1307" y="152" width="1" height="1" fill="#9cdcfe" opacity=".25"/><rect x="1307" y="153" width="1" height="1" fill="#9cdcfe" opacity=".55"/><rect x="1308" y="152" width="1" height="2" fill="#9cdcfe" opacity=".5"/><rect x="1309" y="152" width="1" height="1" fill="#9cdcfe" opacity=".25"/><rect x="1309" y="153" width="1" height="1" fill="#9cdcfe" opacity=".55"/><rect x="1310" y="152" width="1" height="1" fill="#9cdcfe" opacity=".25"/><rect x="1310" y="153" width="1" height="1" fill="#9cdcfe" opacity=".55"/><rect x="1311" y="152" width="1" height="2" fill="#9cdcfe" opacity=".5"/><rect x="1312" y="152" width="1" height="1" fill="#9cdcfe" opacity=".25"/><rect x="1312" y="153" width="1" height="1" fill="#9cdcfe" opacity=".55"/><rect x="1313" y="152" width="1" height="2" fill="#9cdcfe" opacity=".5"/><rect x="1314" y="152" width="1" height="1" fill="#9cdcfe" opacity=".25"/><rect x="1314" y="153" width="1" height="1" fill="#9cdcfe" opacity=".55"/><rect x="1315" y="153" width="1" height="1" fill="#cccccc" opacity=".35"/><rect x="1317" y="152" width="1" height="2" fill="#569cd6" opacity=".5"/><rect x="1318" y="152" width="1" height="1" fill="#569cd6" opacity=".25"/><rect x="1318" y="153" width="1" height="1" fill="#569cd6" opacity=".55"/><rect x="1319" y="152" width="1" height="2" fill="#569cd6" opacity=".5"/><rect x="1320" y="152" width="1" height="1" fill="#569cd6" opacity=".25"/><rect x="1320" y="153" width="1" height="1" fill="#569cd6" opacity=".55"/><rect x="1321" y="152" width="1" height="1" fill="#569cd6" opacity=".25"/><rect x="1321" y="153" width="1" height="1" fill="#569cd6" opacity=".55"/><rect x="1322" y="152" width="1" height="2" fill="#ffd700" opacity=".5"/><rect x="1323" y="152" width="1" height="2" fill="#179fff" opacity=".5"/><rect x="1324" y="153" width="1" height="1" fill="#cccccc" opacity=".35"/><rect x="1256" y="154" width="1" height="2" fill="#da70d6" opacity=".5"/><rect x="1256" y="158" width="1" height="2" fill="#6a9955" opacity=".5"/><rect x="1257" y="159" width="1" height="1" fill="#6a9955" opacity=".35"/><rect x="1258" y="159" width="1" height="1" fill="#6a9955" opacity=".35"/><rect x="1257" y="161" width="1" height="1" fill="#6a9955" opacity=".35"/><rect x="1259" y="160" width="1" height="2" fill="#6a9955" opacity=".5"/><rect x="1260" y="160" width="1" height="1" fill="#6a9955" opacity=".25"/><rect x="1260" y="161" width="1" height="1" fill="#6a9955" opacity=".55"/><rect x="1261" y="160" width="1" height="1" fill="#6a9955" opacity=".25"/><rect x="1261" y="161" width="1" height="1" fill="#6a9955" opacity=".55"/><rect x="1262" y="160" width="1" height="2" fill="#6a9955" opacity=".5"/><rect x="1263" y="160" width="1" height="1" fill="#6a9955" opacity=".25"/><rect x="1263" y="161" width="1" height="1" fill="#6a9955" opacity=".55"/><rect x="1264" y="160" width="1" height="1" fill="#6a9955" opacity=".25"/><rect x="1264" y="161" width="1" height="1" fill="#6a9955" opacity=".55"/><rect x="1265" y="160" width="1" height="1" fill="#6a9955" opacity=".25"/><rect x="1265" y="161" width="1" height="1" fill="#6a9955" opacity=".55"/><rect x="1267" y="160" width="1" height="1" fill="#6a9955" opacity=".25"/><rect x="1267" y="161" width="1" height="1" fill="#6a9955" opacity=".55"/><rect x="1268" y="160" width="1" height="1" fill="#6a9955" opacity=".25"/><rect x="1268" y="161" width="1" height="1" fill="#6a9955" opacity=".55"/><rect x="1270" y="160" width="1" height="1" fill="#6a9955" opacity=".25"/><rect x="1270" y="161" width="1" height="1" fill="#6a9955" opacity=".55"/><rect x="1271" y="160" width="1" height="1" fill="#6a9955" opacity=".25"/><rect x="1271" y="161" width="1" height="1" fill="#6a9955" opacity=".55"/><rect x="1272" y="160" width="1" height="2" fill="#6a9955" opacity=".5"/><rect x="1273" y="160" width="1" height="2" fill="#6a9955" opacity=".5"/><rect x="1274" y="160" width="1" height="1" fill="#6a9955" opacity=".25"/><rect x="1274" y="161" width="1" height="1" fill="#6a9955" opacity=".55"/><rect x="1275" y="160" width="1" height="1" fill="#6a9955" opacity=".25"/><rect x="1275" y="161" width="1" height="1" fill="#6a9955" opacity=".55"/><rect x="1276" y="160" width="1" height="2" fill="#6a9955" opacity=".5"/><rect x="1277" y="160" width="1" height="1" fill="#6a9955" opacity=".25"/><rect x="1277" y="161" width="1" height="1" fill="#6a9955" opacity=".55"/><rect x="1278" y="160" width="1" height="1" fill="#6a9955" opacity=".25"/><rect x="1278" y="161" width="1" height="1" fill="#6a9955" opacity=".55"/><rect x="1279" y="160" width="1" height="1" fill="#6a9955" opacity=".25"/><rect x="1279" y="161" width="1" height="1" fill="#6a9955" opacity=".55"/><rect x="1280" y="160" width="1" height="2" fill="#6a9955" opacity=".5"/><rect x="1281" y="160" width="1" height="1" fill="#6a9955" opacity=".25"/><rect x="1281" y="161" width="1" height="1" fill="#6a9955" opacity=".55"/><rect x="1282" y="160" width="1" height="2" fill="#6a9955" opacity=".5"/><rect x="1284" y="160" width="1" height="1" fill="#6a9955" opacity=".25"/><rect x="1284" y="161" width="1" height="1" fill="#6a9955" opacity=".55"/><rect x="1285" y="160" width="1" height="1" fill="#6a9955" opacity=".25"/><rect x="1285" y="161" width="1" height="1" fill="#6a9955" opacity=".55"/><rect x="1286" y="160" width="1" height="1" fill="#6a9955" opacity=".25"/><rect x="1286" y="161" width="1" height="1" fill="#6a9955" opacity=".55"/><rect x="1287" y="160" width="1" height="1" fill="#6a9955" opacity=".25"/><rect x="1287" y="161" width="1" height="1" fill="#6a9955" opacity=".55"/><rect x="1288" y="160" width="1" height="1" fill="#6a9955" opacity=".25"/><rect x="1288" y="161" width="1" height="1" fill="#6a9955" opacity=".55"/><rect x="1289" y="160" width="1" height="1" fill="#6a9955" opacity=".25"/><rect x="1289" y="161" width="1" height="1" fill="#6a9955" opacity=".55"/><rect x="1290" y="160" width="1" height="1" fill="#6a9955" opacity=".25"/><rect x="1290" y="161" width="1" height="1" fill="#6a9955" opacity=".55"/><rect x="1291" y="161" width="1" height="1" fill="#6a9955" opacity=".35"/><rect x="1257" y="163" width="1" height="1" fill="#6a9955" opacity=".35"/><rect x="1258" y="162" width="1" height="2" fill="#6a9955" opacity=".5"/><rect x="1256" y="164" width="1" height="1" fill="#569cd6" opacity=".25"/><rect x="1256" y="165" width="1" height="1" fill="#569cd6" opacity=".55"/><rect x="1257" y="164" width="1" height="1" fill="#569cd6" opacity=".25"/><rect x="1257" y="165" width="1" height="1" fill="#569cd6" opacity=".55"/><rect x="1258" y="164" width="1" height="2" fill="#569cd6" opacity=".5"/><rect x="1259" y="164" width="1" height="2" fill="#569cd6" opacity=".5"/><rect x="1260" y="164" width="1" height="1" fill="#569cd6" opacity=".25"/><rect x="1260" y="165" width="1" height="1" fill="#569cd6" opacity=".55"/><rect x="1261" y="164" width="1" height="1" fill="#569cd6" opacity=".25"/><rect x="1261" y="165" width="1" height="1" fill="#569cd6" opacity=".55"/><rect x="1263" y="164" width="1" height="2" fill="#569cd6" opacity=".5"/><rect x="1264" y="164" width="1" height="1" fill="#569cd6" opacity=".25"/><rect x="1264" y="165" width="1" height="1" fill="#569cd6" opacity=".55"/><rect x="1265" y="164" width="1" height="1" fill="#569cd6" opacity=".25"/><rect x="1265" y="165" width="1" height="1" fill="#569cd6" opacity=".55"/><rect x="1266" y="164" width="1" height="1" fill="#569cd6" opacity=".25"/><rect x="1266" y="165" width="1" height="1" fill="#569cd6" opacity=".55"/><rect x="1267" y="164" width="1" height="2" fill="#569cd6" opacity=".5"/><rect x="1268" y="164" width="1" height="1" fill="#569cd6" opacity=".25"/><rect x="1268" y="165" width="1" height="1" fill="#569cd6" opacity=".55"/><rect x="1269" y="164" width="1" height="1" fill="#569cd6" opacity=".25"/><rect x="1269" y="165" width="1" height="1" fill="#569cd6" opacity=".55"/><rect x="1270" y="164" width="1" height="1" fill="#569cd6" opacity=".25"/><rect x="1270" y="165" width="1" height="1" fill="#569cd6" opacity=".55"/><rect x="1272" y="164" width="1" height="2" fill="#dcdcaa" opacity=".5"/><rect x="1273" y="164" width="1" height="1" fill="#dcdcaa" opacity=".25"/><rect x="1273" y="165" width="1" height="1" fill="#dcdcaa" opacity=".55"/><rect x="1274" y="164" width="1" height="1" fill="#dcdcaa" opacity=".25"/><rect x="1274" y="165" width="1" height="1" fill="#dcdcaa" opacity=".55"/><rect x="1275" y="164" width="1" height="2" fill="#dcdcaa" opacity=".5"/><rect x="1276" y="164" width="1" height="1" fill="#dcdcaa" opacity=".25"/><rect x="1276" y="165" width="1" height="1" fill="#dcdcaa" opacity=".55"/><rect x="1277" y="164" width="1" height="1" fill="#dcdcaa" opacity=".25"/><rect x="1277" y="165" width="1" height="1" fill="#dcdcaa" opacity=".55"/><rect x="1278" y="164" width="1" height="1" fill="#dcdcaa" opacity=".25"/><rect x="1278" y="165" width="1" height="1" fill="#dcdcaa" opacity=".55"/><rect x="1279" y="164" width="1" height="2" fill="#da70d6" opacity=".5"/><rect x="1280" y="164" width="1" height="2" fill="#4ec9b0" opacity=".5"/><rect x="1281" y="164" width="1" height="1" fill="#4ec9b0" opacity=".25"/><rect x="1281" y="165" width="1" height="1" fill="#4ec9b0" opacity=".55"/><rect x="1282" y="164" width="1" height="1" fill="#4ec9b0" opacity=".25"/><rect x="1282" y="165" width="1" height="1" fill="#4ec9b0" opacity=".55"/><rect x="1283" y="164" width="1" height="1" fill="#4ec9b0" opacity=".25"/><rect x="1283" y="165" width="1" height="1" fill="#4ec9b0" opacity=".55"/><rect x="1284" y="164" width="1" height="1" fill="#4ec9b0" opacity=".25"/><rect x="1284" y="165" width="1" height="1" fill="#4ec9b0" opacity=".55"/><rect x="1285" y="164" width="1" height="1" fill="#4ec9b0" opacity=".25"/><rect x="1285" y="165" width="1" height="1" fill="#4ec9b0" opacity=".55"/><rect x="1286" y="164" width="1" height="2" fill="#4ec9b0" opacity=".5"/><rect x="1288" y="164" width="1" height="2" fill="#9cdcfe" opacity=".5"/><rect x="1289" y="164" width="1" height="1" fill="#9cdcfe" opacity=".25"/><rect x="1289" y="165" width="1" height="1" fill="#9cdcfe" opacity=".55"/><rect x="1290" y="164" width="1" height="1" fill="#9cdcfe" opacity=".25"/><rect x="1290" y="165" width="1" height="1" fill="#9cdcfe" opacity=".55"/><rect x="1291" y="164" width="1" height="1" fill="#9cdcfe" opacity=".25"/><rect x="1291" y="165" width="1" height="1" fill="#9cdcfe" opacity=".55"/><rect x="1292" y="164" width="1" height="1" fill="#9cdcfe" opacity=".25"/><rect x="1292" y="165" width="1" height="1" fill="#9cdcfe" opacity=".55"/><rect x="1293" y="164" width="1" height="1" fill="#9cdcfe" opacity=".25"/><rect x="1293" y="165" width="1" height="1" fill="#9cdcfe" opacity=".55"/><rect x="1294" y="164" width="1" height="1" fill="#9cdcfe" opacity=".25"/><rect x="1294" y="165" width="1" height="1" fill="#9cdcfe" opacity=".55"/><rect x="1295" y="164" width="1" height="2" fill="#9cdcfe" opacity=".5"/><rect x="1296" y="164" width="1" height="2" fill="#da70d6" opacity=".5"/><rect x="1297" y="165" width="1" height="1" fill="#cccccc" opacity=".35"/><rect x="1299" y="164" width="1" height="2" fill="#4ec9b0" opacity=".5"/><rect x="1300" y="164" width="1" height="1" fill="#4ec9b0" opacity=".25"/><rect x="1300" y="165" width="1" height="1" fill="#4ec9b0" opacity=".55"/><rect x="1301" y="164" width="1" height="2" fill="#4ec9b0" opacity=".5"/><rect x="1302" y="164" width="1" height="1" fill="#4ec9b0" opacity=".25"/><rect x="1302" y="165" width="1" height="1" fill="#4ec9b0" opacity=".55"/><rect x="1303" y="164" width="1" height="1" fill="#4ec9b0" opacity=".25"/><rect x="1303" y="165" width="1" height="1" fill="#4ec9b0" opacity=".55"/><rect x="1304" y="164" width="1" height="1" fill="#4ec9b0" opacity=".25"/><rect x="1304" y="165" width="1" height="1" fill="#4ec9b0" opacity=".55"/><rect x="1305" y="164" width="1" height="1" fill="#4ec9b0" opacity=".25"/><rect x="1305" y="165" width="1" height="1" fill="#4ec9b0" opacity=".55"/><rect x="1306" y="164" width="1" height="2" fill="#4ec9b0" opacity=".5"/><rect x="1307" y="164" width="1" height="2" fill="#4ec9b0" opacity=".5"/><rect x="1308" y="164" width="1" height="1" fill="#4ec9b0" opacity=".25"/><rect x="1308" y="165" width="1" height="1" fill="#4ec9b0" opacity=".55"/><rect x="1309" y="164" width="1" height="1" fill="#4ec9b0" opacity=".25"/><rect x="1309" y="165" width="1" height="1" fill="#4ec9b0" opacity=".55"/><rect x="1310" y="164" width="1" height="1" fill="#4ec9b0" opacity=".25"/><rect x="1310" y="165" width="1" height="1" fill="#4ec9b0" opacity=".55"/><rect x="1311" y="164" width="1" height="1" fill="#4ec9b0" opacity=".25"/><rect x="1311" y="165" width="1" height="1" fill="#4ec9b0" opacity=".55"/><rect x="1312" y="164" width="1" height="1" fill="#4ec9b0" opacity=".25"/><rect x="1312" y="165" width="1" height="1" fill="#4ec9b0" opacity=".55"/><rect x="1313" y="164" width="1" height="1" fill="#4ec9b0" opacity=".25"/><rect x="1313" y="165" width="1" height="1" fill="#4ec9b0" opacity=".55"/><rect x="1314" y="164" width="1" height="1" fill="#4ec9b0" opacity=".25"/><rect x="1314" y="165" width="1" height="1" fill="#4ec9b0" opacity=".55"/><rect x="1256" y="166" width="1" height="2" fill="#da70d6" opacity=".5"/><rect x="1260" y="168" width="1" height="2" fill="#4ec9b0" opacity=".5"/><rect x="1261" y="168" width="1" height="1" fill="#4ec9b0" opacity=".25"/><rect x="1261" y="169" width="1" height="1" fill="#4ec9b0" opacity=".55"/><rect x="1262" y="168" width="1" height="2" fill="#4ec9b0" opacity=".5"/><rect x="1263" y="168" width="1" height="2" fill="#4ec9b0" opacity=".5"/><rect x="1264" y="169" width="1" height="1" fill="#cccccc" opacity=".35"/><rect x="1265" y="169" width="1" height="1" fill="#cccccc" opacity=".35"/><rect x="1266" y="168" width="1" height="1" fill="#dcdcaa" opacity=".25"/><rect x="1266" y="169" width="1" height="1" fill="#dcdcaa" opacity=".55"/><rect x="1267" y="168" width="1" height="1" fill="#dcdcaa" opacity=".25"/><rect x="1267" y="169" width="1" height="1" fill="#dcdcaa" opacity=".55"/><rect x="1268" y="168" width="1" height="1" fill="#dcdcaa" opacity=".25"/><rect x="1268" y="169" width="1" height="1" fill="#dcdcaa" opacity=".55"/><rect x="1269" y="168" width="1" height="1" fill="#dcdcaa" opacity=".25"/><rect x="1269" y="169" width="1" height="1" fill="#dcdcaa" opacity=".55"/><rect x="1270" y="168" width="1" height="2" fill="#dcdcaa" opacity=".5"/><rect x="1271" y="168" width="1" height="2" fill="#179fff" opacity=".5"/><rect x="1272" y="168" width="1" height="2" fill="#ce9178" opacity=".5"/><rect x="1273" y="168" width="1" height="1" fill="#ce9178" opacity=".25"/><rect x="1273" y="169" width="1" height="1" fill="#ce9178" opacity=".55"/><rect x="1274" y="168" width="1" height="1" fill="#ce9178" opacity=".25"/><rect x="1274" y="169" width="1" height="1" fill="#ce9178" opacity=".55"/><rect x="1275" y="168" width="1" height="2" fill="#ce9178" opacity=".5"/><rect x="1276" y="168" width="1" height="2" fill="#ce9178" opacity=".5"/><rect x="1277" y="168" width="1" height="2" fill="#179fff" opacity=".5"/><rect x="1278" y="169" width="1" height="1" fill="#cccccc" opacity=".35"/><rect x="1279" y="168" width="1" height="2" fill="#cccccc" opacity=".5"/><rect x="1280" y="168" width="1" height="2" fill="#dcdcaa" opacity=".5"/><rect x="1281" y="168" width="1" height="1" fill="#dcdcaa" opacity=".25"/><rect x="1281" y="169" width="1" height="1" fill="#dcdcaa" opacity=".55"/><rect x="1282" y="168" width="1" height="1" fill="#dcdcaa" opacity=".25"/><rect x="1282" y="169" width="1" height="1" fill="#dcdcaa" opacity=".55"/><rect x="1283" y="168" width="1" height="1" fill="#dcdcaa" opacity=".25"/><rect x="1283" y="169" width="1" height="1" fill="#dcdcaa" opacity=".55"/><rect x="1284" y="168" width="1" height="1" fill="#dcdcaa" opacity=".25"/><rect x="1284" y="169" width="1" height="1" fill="#dcdcaa" opacity=".55"/><rect x="1285" y="168" width="1" height="2" fill="#dcdcaa" opacity=".5"/><rect x="1286" y="168" width="1" height="2" fill="#179fff" opacity=".5"/><rect x="1287" y="168" width="1" height="2" fill="#179fff" opacity=".5"/><rect x="1288" y="169" width="1" height="1" fill="#cccccc" opacity=".35"/><rect x="1260" y="172" width="1" height="2" fill="#9cdcfe" opacity=".5"/><rect x="1261" y="172" width="1" height="1" fill="#9cdcfe" opacity=".25"/><rect x="1261" y="173" width="1" height="1" fill="#9cdcfe" opacity=".55"/><rect x="1262" y="172" width="1" height="1" fill="#9cdcfe" opacity=".25"/><rect x="1262" y="173" width="1" height="1" fill="#9cdcfe" opacity=".55"/><rect x="1263" y="172" width="1" height="1" fill="#9cdcfe" opacity=".25"/><rect x="1263" y="173" width="1" height="1" fill="#9cdcfe" opacity=".55"/><rect x="1264" y="172" width="1" height="1" fill="#9cdcfe" opacity=".25"/><rect x="1264" y="173" width="1" height="1" fill="#9cdcfe" opacity=".55"/><rect x="1265" y="172" width="1" height="1" fill="#9cdcfe" opacity=".25"/><rect x="1265" y="173" width="1" height="1" fill="#9cdcfe" opacity=".55"/><rect x="1266" y="172" width="1" height="1" fill="#9cdcfe" opacity=".25"/><rect x="1266" y="173" width="1" height="1" fill="#9cdcfe" opacity=".55"/><rect x="1267" y="172" width="1" height="2" fill="#9cdcfe" opacity=".5"/><rect x="1268" y="173" width="1" height="1" fill="#cccccc" opacity=".35"/><rect x="1269" y="172" width="1" height="2" fill="#cccccc" opacity=".5"/><rect x="1270" y="172" width="1" height="1" fill="#dcdcaa" opacity=".25"/><rect x="1270" y="173" width="1" height="1" fill="#dcdcaa" opacity=".55"/><rect x="1271" y="172" width="1" height="1" fill="#dcdcaa" opacity=".25"/><rect x="1271" y="173" width="1" height="1" fill="#dcdcaa" opacity=".55"/><rect x="1272" y="172" width="1" height="1" fill="#dcdcaa" opacity=".25"/><rect x="1272" y="173" width="1" height="1" fill="#dcdcaa" opacity=".55"/><rect x="1273" y="172" width="1" height="1" fill="#dcdcaa" opacity=".25"/><rect x="1273" y="173" width="1" height="1" fill="#dcdcaa" opacity=".55"/><rect x="1274" y="172" width="1" height="1" fill="#dcdcaa" opacity=".25"/><rect x="1274" y="173" width="1" height="1" fill="#dcdcaa" opacity=".55"/><rect x="1275" y="172" width="1" height="1" fill="#dcdcaa" opacity=".25"/><rect x="1275" y="173" width="1" height="1" fill="#dcdcaa" opacity=".55"/><rect x="1276" y="172" width="1" height="1" fill="#dcdcaa" opacity=".25"/><rect x="1276" y="173" width="1" height="1" fill="#dcdcaa" opacity=".55"/><rect x="1277" y="172" width="1" height="2" fill="#179fff" opacity=".5"/><rect x="1278" y="172" width="1" height="2" fill="#179fff" opacity=".5"/><rect x="1279" y="173" width="1" height="1" fill="#cccccc" opacity=".35"/><rect x="1280" y="172" width="1" height="2" fill="#cccccc" opacity=".5"/><rect x="1281" y="172" width="1" height="1" fill="#dcdcaa" opacity=".25"/><rect x="1281" y="173" width="1" height="1" fill="#dcdcaa" opacity=".55"/><rect x="1282" y="172" width="1" height="1" fill="#dcdcaa" opacity=".25"/><rect x="1282" y="173" width="1" height="1" fill="#dcdcaa" opacity=".55"/><rect x="1283" y="172" width="1" height="1" fill="#dcdcaa" opacity=".25"/><rect x="1283" y="173" width="1" height="1" fill="#dcdcaa" opacity=".55"/><rect x="1284" y="172" width="1" height="1" fill="#dcdcaa" opacity=".25"/><rect x="1284" y="173" width="1" height="1" fill="#dcdcaa" opacity=".55"/><rect x="1285" y="172" width="1" height="2" fill="#dcdcaa" opacity=".5"/><rect x="1286" y="172" width="1" height="1" fill="#dcdcaa" opacity=".25"/><rect x="1286" y="173" width="1" height="1" fill="#dcdcaa" opacity=".55"/><rect x="1287" y="172" width="1" height="2" fill="#dcdcaa" opacity=".5"/><rect x="1288" y="172" width="1" height="1" fill="#dcdcaa" opacity=".25"/><rect x="1288" y="173" width="1" height="1" fill="#dcdcaa" opacity=".55"/><rect x="1289" y="172" width="1" height="2" fill="#dcdcaa" opacity=".5"/><rect x="1290" y="172" width="1" height="1" fill="#dcdcaa" opacity=".25"/><rect x="1290" y="173" width="1" height="1" fill="#dcdcaa" opacity=".55"/><rect x="1291" y="172" width="1" height="2" fill="#179fff" opacity=".5"/><rect x="1292" y="172" width="1" height="2" fill="#179fff" opacity=".5"/><rect x="1293" y="173" width="1" height="1" fill="#cccccc" opacity=".35"/><rect x="1260" y="176" width="1" height="2" fill="#9cdcfe" opacity=".5"/><rect x="1261" y="176" width="1" height="1" fill="#9cdcfe" opacity=".25"/><rect x="1261" y="177" width="1" height="1" fill="#9cdcfe" opacity=".55"/><rect x="1262" y="176" width="1" height="1" fill="#9cdcfe" opacity=".25"/><rect x="1262" y="177" width="1" height="1" fill="#9cdcfe" opacity=".55"/><rect x="1263" y="176" width="1" height="1" fill="#9cdcfe" opacity=".25"/><rect x="1263" y="177" width="1" height="1" fill="#9cdcfe" opacity=".55"/><rect x="1264" y="176" width="1" height="1" fill="#9cdcfe" opacity=".25"/><rect x="1264" y="177" width="1" height="1" fill="#9cdcfe" opacity=".55"/><rect x="1265" y="176" width="1" height="1" fill="#9cdcfe" opacity=".25"/><rect x="1265" y="177" width="1" height="1" fill="#9cdcfe" opacity=".55"/><rect x="1266" y="176" width="1" height="1" fill="#9cdcfe" opacity=".25"/><rect x="1266" y="177" width="1" height="1" fill="#9cdcfe" opacity=".55"/><rect x="1267" y="176" width="1" height="2" fill="#9cdcfe" opacity=".5"/><rect x="1268" y="177" width="1" height="1" fill="#cccccc" opacity=".35"/><rect x="1269" y="176" width="1" height="2" fill="#cccccc" opacity=".5"/><rect x="1270" y="176" width="1" height="1" fill="#dcdcaa" opacity=".25"/><rect x="1270" y="177" width="1" height="1" fill="#dcdcaa" opacity=".55"/><rect x="1271" y="176" width="1" height="1" fill="#dcdcaa" opacity=".25"/><rect x="1271" y="177" width="1" height="1" fill="#dcdcaa" opacity=".55"/><rect x="1272" y="176" width="1" height="1" fill="#dcdcaa" opacity=".25"/><rect x="1272" y="177" width="1" height="1" fill="#dcdcaa" opacity=".55"/><rect x="1273" y="176" width="1" height="1" fill="#dcdcaa" opacity=".25"/><rect x="1273" y="177" width="1" height="1" fill="#dcdcaa" opacity=".55"/><rect x="1274" y="176" width="1" height="1" fill="#dcdcaa" opacity=".25"/><rect x="1274" y="177" width="1" height="1" fill="#dcdcaa" opacity=".55"/><rect x="1275" y="176" width="1" height="1" fill="#dcdcaa" opacity=".25"/><rect x="1275" y="177" width="1" height="1" fill="#dcdcaa" opacity=".55"/><rect x="1276" y="176" width="1" height="1" fill="#dcdcaa" opacity=".25"/><rect x="1276" y="177" width="1" height="1" fill="#dcdcaa" opacity=".55"/><rect x="1277" y="176" width="1" height="2" fill="#179fff" opacity=".5"/><rect x="1278" y="176" width="1" height="2" fill="#179fff" opacity=".5"/><rect x="1279" y="177" width="1" height="1" fill="#cccccc" opacity=".35"/><rect x="1280" y="176" width="1" height="2" fill="#cccccc" opacity=".5"/><rect x="1281" y="176" width="1" height="1" fill="#dcdcaa" opacity=".25"/><rect x="1281" y="177" width="1" height="1" fill="#dcdcaa" opacity=".55"/><rect x="1282" y="176" width="1" height="1" fill="#dcdcaa" opacity=".25"/><rect x="1282" y="177" width="1" height="1" fill="#dcdcaa" opacity=".55"/><rect x="1283" y="176" width="1" height="1" fill="#dcdcaa" opacity=".25"/><rect x="1283" y="177" width="1" height="1" fill="#dcdcaa" opacity=".55"/><rect x="1284" y="176" width="1" height="1" fill="#dcdcaa" opacity=".25"/><rect x="1284" y="177" width="1" height="1" fill="#dcdcaa" opacity=".55"/><rect x="1285" y="176" width="1" height="1" fill="#dcdcaa" opacity=".25"/><rect x="1285" y="177" width="1" height="1" fill="#dcdcaa" opacity=".55"/><rect x="1286" y="176" width="1" height="1" fill="#dcdcaa" opacity=".25"/><rect x="1286" y="177" width="1" height="1" fill="#dcdcaa" opacity=".55"/><rect x="1287" y="176" width="1" height="1" fill="#dcdcaa" opacity=".25"/><rect x="1287" y="177" width="1" height="1" fill="#dcdcaa" opacity=".55"/><rect x="1288" y="176" width="1" height="1" fill="#dcdcaa" opacity=".25"/><rect x="1288" y="177" width="1" height="1" fill="#dcdcaa" opacity=".55"/><rect x="1289" y="176" width="1" height="2" fill="#dcdcaa" opacity=".5"/><rect x="1290" y="176" width="1" height="1" fill="#dcdcaa" opacity=".25"/><rect x="1290" y="177" width="1" height="1" fill="#dcdcaa" opacity=".55"/><rect x="1291" y="176" width="1" height="2" fill="#dcdcaa" opacity=".5"/><rect x="1292" y="176" width="1" height="1" fill="#dcdcaa" opacity=".25"/><rect x="1292" y="177" width="1" height="1" fill="#dcdcaa" opacity=".55"/><rect x="1293" y="176" width="1" height="2" fill="#dcdcaa" opacity=".5"/><rect x="1294" y="176" width="1" height="1" fill="#dcdcaa" opacity=".25"/><rect x="1294" y="177" width="1" height="1" fill="#dcdcaa" opacity=".55"/><rect x="1295" y="176" width="1" height="1" fill="#dcdcaa" opacity=".25"/><rect x="1295" y="177" width="1" height="1" fill="#dcdcaa" opacity=".55"/><rect x="1296" y="176" width="1" height="2" fill="#179fff" opacity=".5"/><rect x="1297" y="176" width="1" height="2" fill="#179fff" opacity=".5"/><rect x="1298" y="177" width="1" height="1" fill="#cccccc" opacity=".35"/><rect x="1260" y="180" width="1" height="1" fill="#c586c0" opacity=".25"/><rect x="1260" y="181" width="1" height="1" fill="#c586c0" opacity=".55"/><rect x="1261" y="180" width="1" height="1" fill="#c586c0" opacity=".25"/><rect x="1261" y="181" width="1" height="1" fill="#c586c0" opacity=".55"/><rect x="1262" y="180" width="1" height="2" fill="#c586c0" opacity=".5"/><rect x="1263" y="180" width="1" height="1" fill="#c586c0" opacity=".25"/><rect x="1263" y="181" width="1" height="1" fill="#c586c0" opacity=".55"/><rect x="1264" y="180" width="1" height="1" fill="#c586c0" opacity=".25"/><rect x="1264" y="181" width="1" height="1" fill="#c586c0" opacity=".55"/><rect x="1265" y="180" width="1" height="1" fill="#c586c0" opacity=".25"/><rect x="1265" y="181" width="1" height="1" fill="#c586c0" opacity=".55"/><rect x="1267" y="180" width="1" height="1" fill="#dcdcaa" opacity=".25"/><rect x="1267" y="181" width="1" height="1" fill="#dcdcaa" opacity=".55"/><rect x="1268" y="180" width="1" height="1" fill="#dcdcaa" opacity=".25"/><rect x="1268" y="181" width="1" height="1" fill="#dcdcaa" opacity=".55"/><rect x="1269" y="180" width="1" height="2" fill="#dcdcaa" opacity=".5"/><rect x="1270" y="180" width="1" height="1" fill="#dcdcaa" opacity=".25"/><rect x="1270" y="181" width="1" height="1" fill="#dcdcaa" opacity=".55"/><rect x="1271" y="180" width="1" height="1" fill="#dcdcaa" opacity=".25"/><rect x="1271" y="181" width="1" height="1" fill="#dcdcaa" opacity=".55"/><rect x="1272" y="180" width="1" height="1" fill="#dcdcaa" opacity=".25"/><rect x="1272" y="181" width="1" height="1" fill="#dcdcaa" opacity=".55"/><rect x="1273" y="180" width="1" height="1" fill="#dcdcaa" opacity=".25"/><rect x="1273" y="181" width="1" height="1" fill="#dcdcaa" opacity=".55"/><rect x="1274" y="180" width="1" height="2" fill="#dcdcaa" opacity=".5"/><rect x="1275" y="180" width="1" height="2" fill="#179fff" opacity=".5"/><rect x="1276" y="180" width="1" height="2" fill="#ce9178" opacity=".5"/><rect x="1277" y="180" width="1" height="2" fill="#ce9178" opacity=".5"/><rect x="1278" y="180" width="1" height="2" fill="#ce9178" opacity=".5"/><rect x="1279" y="180" width="1" height="2" fill="#179fff" opacity=".5"/><rect x="1280" y="181" width="1" height="1" fill="#cccccc" opacity=".35"/><rect x="1256" y="182" width="1" height="2" fill="#da70d6" opacity=".5"/><rect x="1252" y="184" width="1" height="2" fill="#ffd700" opacity=".5"/></svg>
<div class="a" style="left:1352px;top:92px;width:1px;height:652px;background:#111111"></div>
<div class="a" style="left:1353px;top:92px;width:13px;height:2px;background:#a0a0a0"></div>
<div class="a" style="left:0;top:744px;width:1366px;height:21px;background:#181818;border-top:1px solid #2b2b2b"></div>
<div class="a" style="left:0;top:744px;width:34px;height:22px;background:#0078d4"></div>
<svg class="a" style="left:10px;top:748px" width="14" height="14" viewBox="0 0 14 14"><path d="M3 5.5L6 8.5L3 11.5M11 2.5L8 5.5L11 8.5" fill="none" stroke="#ffffff" stroke-width="1.2"/></svg>
<svg class="a" style="left:42px;top:748px" width="14" height="14" viewBox="0 0 14 14"><circle cx="7" cy="7" r="6" fill="none" stroke="#cccccc" stroke-width="1.1"/><path d="M4.5 4.5L9.5 9.5M9.5 4.5L4.5 9.5" stroke="#cccccc" stroke-width="1.1"/></svg>
<div class="t" style="left:59px;top:750px;font-size:12px;color:#cccccc">0</div>
<svg class="a" style="left:70px;top:748px" width="14" height="14" viewBox="0 0 14 14"><path d="M7 1.5L13 12.5H1Z" fill="none" stroke="#cccccc" stroke-width="1.1"/><path d="M7 5.5V9M7 10.2V11.2" stroke="#cccccc" stroke-width="1.1"/></svg>
<div class="t" style="left:86px;top:750px;font-size:12px;color:#cccccc">0</div>
<svg class="a" style="left:110px;top:748px" width="12" height="14" viewBox="0 0 12 14"><path d="M6.5 1L2 8H6L4.5 13L10 5.5H6.5L8.5 1Z" fill="none" stroke="#cccccc" stroke-width="1"/></svg>
<div class="t" style="left:894px;top:750px;font-size:12px;color:#cccccc;transform:scaleX(0.95);transform-origin:0 0">Ln 1, Col 1</div>
<div class="t" style="left:965px;top:750px;font-size:12px;color:#cccccc;transform:scaleX(0.925);transform-origin:0 0">Spaces: 4</div>
<div class="t" style="left:1030px;top:750px;font-size:12px;color:#cccccc;transform:scaleX(0.955);transform-origin:0 0">UTF-8</div>
<div class="t" style="left:1077px;top:750px;font-size:12px;color:#cccccc;transform:scaleX(0.85);transform-origin:0 0">LF</div>
<div class="t" style="left:1125px;top:750px;font-size:12px;color:#cccccc;transform:scaleX(0.9);transform-origin:0 0">PHP</div>
<div class="t" style="left:1210px;top:750px;font-size:12px;color:#cccccc;transform:scaleX(0.95);transform-origin:0 0">Go Live</div>
<div class="t" style="left:1283px;top:750px;font-size:12px;color:#cccccc;transform:scaleX(1.0);transform-origin:0 0">Prettier</div>
<svg class="a" style="left:1106px;top:749px" width="12" height="12" viewBox="0 0 12 12" fill="none" stroke="#cccccc" stroke-width="1.1"><path d="M3.3 1H2.7C2 1 1.7 1.4 1.7 2V4.6C1.7 5.3 1.3 5.8 0.8 6C1.3 6.2 1.7 6.7 1.7 7.4V10C1.7 10.6 2 11 2.7 11H3.3"/><path d="M8.7 1H9.3C10 1 10.3 1.4 10.3 2V4.6C10.3 5.3 10.7 5.8 11.2 6C10.7 6.2 10.3 6.7 10.3 7.4V10C10.3 10.6 10 11 9.3 11H8.7"/></svg>
<svg class="a" style="left:1162px;top:748px" width="16" height="14" viewBox="0 0 16 14"><path fill="#cccccc" d="M4 1C2 1 1 2.3 1 4V6.5C0.5 7 0.5 8 0.5 9C0.5 11.5 3.5 13 8 13C12.5 13 15.5 11.5 15.5 9C15.5 8 15.5 7 15 6.5V4C15 2.3 14 1 12 1C10.5 1 9 1.5 8 3C7 1.5 5.5 1 4 1Z"/><path fill="#181818" d="M3 4.5C3 3.5 3.5 3 4.5 3C6 3 7 3.5 7 5C7 6.5 6 7 4.5 7C3.5 7 3 6.5 3 5.5ZM9 5C9 3.5 10 3 11.5 3C12.5 3 13 3.5 13 4.5V5.5C13 6.5 12.5 7 11.5 7C10 7 9 6.5 9 5ZM5.5 8.5H6.8V11H5.5ZM9.2 8.5H10.5V11H9.2Z"/></svg>
<svg class="a" style="left:1193px;top:748px" width="14" height="14" viewBox="0 0 14 14" fill="none" stroke="#cccccc" stroke-width="1"><circle cx="7" cy="6" r="1.3"/><path d="M4.5 8.5A3.5 3.5 0 1 1 9.5 8.5M3 10.5A5.8 5.8 0 1 1 11 10.5"/><path d="M7 7.5V13.5" stroke-width="1.6"/></svg>
<svg class="a" style="left:1265px;top:748px" width="14" height="14" viewBox="0 0 14 14" fill="none" stroke="#cccccc" stroke-width="1.1"><circle cx="7" cy="7" r="5.8"/><path d="M3 11L11 3"/></svg>
<svg class="a" style="left:1337px;top:748px" width="14" height="14" viewBox="0 0 14 14" fill="none" stroke="#cccccc" stroke-width="1.1"><path d="M3 10.5V6C3 3.5 4.8 1.5 7 1.5C9.2 1.5 11 3.5 11 6V10.5L12 11.5H2Z"/><path d="M5.5 12.5C5.8 13.2 6.3 13.5 7 13.5C7.7 13.5 8.2 13.2 8.5 12.5"/></svg>
<div class="a" style="left:0;top:766px;width:1366px;height:2px;background:#000"></div>
</body></html>
